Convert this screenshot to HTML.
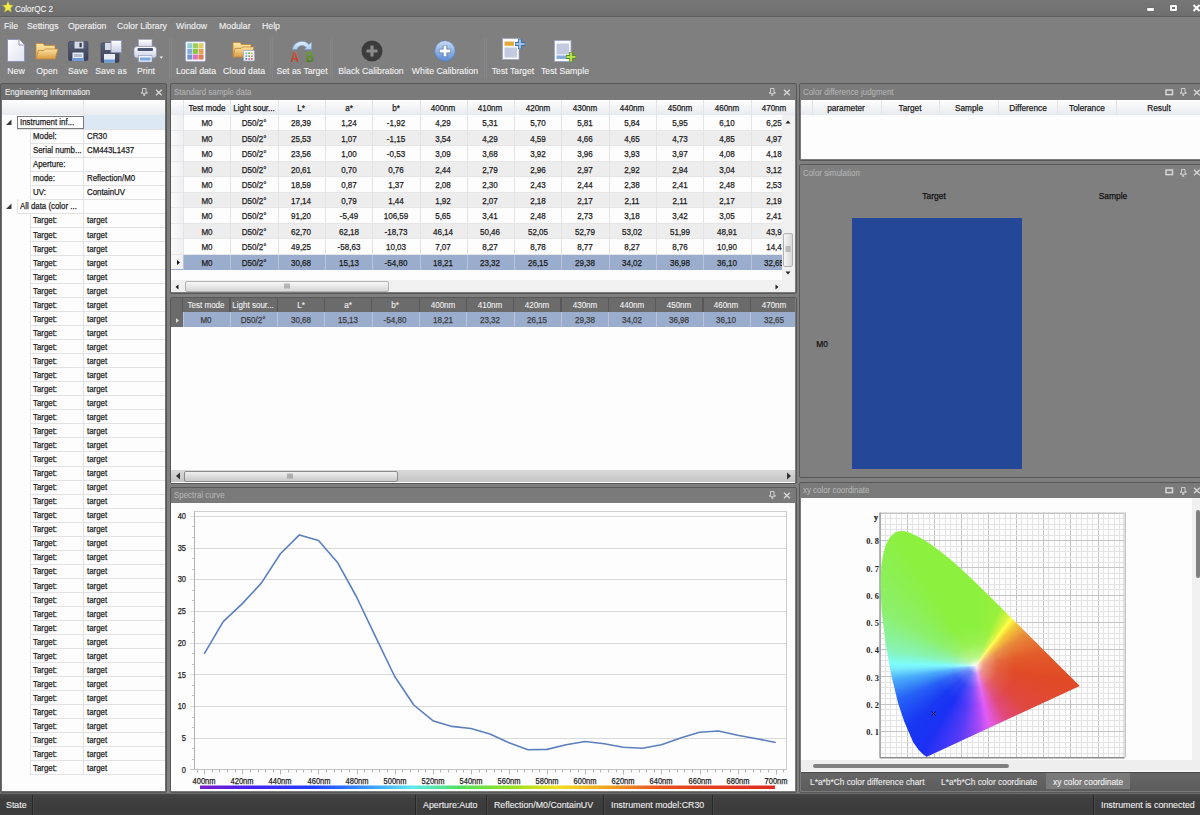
<!DOCTYPE html><html><head><meta charset="utf-8"><style>
*{margin:0;padding:0;box-sizing:border-box}
html,body{width:1200px;height:815px;overflow:hidden}
body{position:relative;background:#7f7f7f;font-family:"Liberation Sans",sans-serif;font-size:10px;color:#222}
.ab{position:absolute}
.t{position:absolute;white-space:nowrap;line-height:1}
.d{-webkit-text-stroke:0.25px currentColor}
.w{-webkit-text-stroke:0.1px currentColor}
.sx{display:inline-block;transform-origin:0 50%}
.wt{color:#f2f2f2}
</style></head><body><div class="ab" style="left:0px;top:0px;width:1200px;height:16px;background:linear-gradient(#777,#6e6e6e)"></div>
<div class="ab" style="left:0px;top:16px;width:1200px;height:1px;background:#5c5c5c"></div>
<div class="ab" style="left:0px;top:17px;width:1200px;height:1px;background:#858585"></div>
<svg class="ab" style="left:2px;top:1px" width="12" height="12" viewBox="0 0 12 12"><path d="M6 0.6 L7.5 4.1 L11.3 4.4 L8.4 6.9 L9.3 10.9 L6 8.8 L2.7 10.9 L3.6 6.9 L0.7 4.4 L4.5 4.1 Z" fill="#f2ef4a" stroke="#c9c23a" stroke-width="0.5"/></svg>
<div class="t w" style="left:15px;top:8.6px;font-size:9.4px;color:#f4f4f4;transform:translate(0,-50%) scaleX(0.86);transform-origin:0 50%;">ColorQC 2</div>
<div class="ab" style="left:1147px;top:8px;width:7px;height:3px;background:#fafafa;border-radius:1px;box-shadow:0 0 1px #444"></div>
<div class="ab" style="left:1170px;top:5px;width:7px;height:6px;border:2px solid #fafafa;border-radius:1px;box-shadow:0 0 1px #444"></div>
<svg class="ab" style="left:1192px;top:4px" width="9" height="8" viewBox="0 0 9 8"><path d="M1.5 1 L7.5 7 M7.5 1 L1.5 7" stroke="#fafafa" stroke-width="2"/></svg>
<div class="t w" style="left:4.3px;top:26px;font-size:9.6px;color:#f4f4f4;transform:translate(0,-50%) scaleX(0.91);transform-origin:0 50%;">File</div>
<div class="t w" style="left:27px;top:26px;font-size:9.6px;color:#f4f4f4;transform:translate(0,-50%) scaleX(0.91);transform-origin:0 50%;">Settings</div>
<div class="t w" style="left:67.6px;top:26px;font-size:9.6px;color:#f4f4f4;transform:translate(0,-50%) scaleX(0.91);transform-origin:0 50%;">Operation</div>
<div class="t w" style="left:116.7px;top:26px;font-size:9.6px;color:#f4f4f4;transform:translate(0,-50%) scaleX(0.91);transform-origin:0 50%;">Color Library</div>
<div class="t w" style="left:176.3px;top:26px;font-size:9.6px;color:#f4f4f4;transform:translate(0,-50%) scaleX(0.91);transform-origin:0 50%;">Window</div>
<div class="t w" style="left:218.6px;top:26px;font-size:9.6px;color:#f4f4f4;transform:translate(0,-50%) scaleX(0.91);transform-origin:0 50%;">Modular</div>
<div class="t w" style="left:261.6px;top:26px;font-size:9.6px;color:#f4f4f4;transform:translate(0,-50%) scaleX(0.91);transform-origin:0 50%;">Help</div>
<svg width="0" height="0" style="position:absolute"><defs>
<linearGradient id="gdoc" x1="0" y1="0" x2="1" y2="1"><stop offset="0" stop-color="#ffffff"/><stop offset="1" stop-color="#dfe3f0"/></linearGradient>
<linearGradient id="gfold" x1="0" y1="0" x2="0" y2="1"><stop offset="0" stop-color="#fbe9a8"/><stop offset="1" stop-color="#e2a94e"/></linearGradient>
<linearGradient id="gfold2" x1="0" y1="0" x2="0" y2="1"><stop offset="0" stop-color="#f9e1a0"/><stop offset="1" stop-color="#dc9c40"/></linearGradient>
<linearGradient id="gflop" x1="0" y1="0" x2="0" y2="1"><stop offset="0" stop-color="#5a6078"/><stop offset="1" stop-color="#3a4058"/></linearGradient>
<linearGradient id="gwc" x1="0" y1="0" x2="0" y2="1"><stop offset="0" stop-color="#c8dcf6"/><stop offset="1" stop-color="#5a8ad0"/></linearGradient>
<linearGradient id="gprn" x1="0" y1="0" x2="0" y2="1"><stop offset="0" stop-color="#ffffff"/><stop offset="1" stop-color="#c9d0e4"/></linearGradient>
</defs></svg>
<svg class="ab" style="left:6px;top:38px" width="20" height="25" viewBox="0 0 20 25"><path d="M1.5 1.5 H13 L18.5 7 V23.5 H1.5 Z" fill="url(#gdoc)" stroke="#8d93bd" stroke-width="1"/><path d="M13 1.5 V7 H18.5" fill="#fff" stroke="#8d93bd" stroke-width="1"/></svg>
<svg class="ab" style="left:35px;top:42px" width="24" height="19" viewBox="0 0 24 19"><path d="M1 1.5 H8 L9.5 3.5 H20 V16.5 H1 Z" fill="url(#gfold)" stroke="#c48a3c" stroke-width="0.8"/><path d="M3.5 8.5 H9 L10.5 7 H23 L20 17 H1 Z" fill="url(#gfold2)" stroke="#c48a3c" stroke-width="0.8"/></svg>
<svg class="ab" style="left:68px;top:41px" width="21" height="21" viewBox="0 0 21 21"><rect x="0.5" y="0.5" width="19.5" height="19" rx="1.5" fill="url(#gflop)" stroke="#3a3f52" stroke-width="0.6"/><rect x="6.5" y="0.5" width="9" height="7" fill="#d7dbe6"/><rect x="11.5" y="1.8" width="2.2" height="4.4" fill="#333a4c"/><rect x="4.5" y="11.5" width="11" height="8.5" fill="#e8ebf3"/><rect x="4.5" y="17" width="11" height="3" fill="#6d9ad8"/><rect x="6" y="13" width="8" height="3" fill="#b8bdd0"/></svg>
<svg class="ab" style="left:100px;top:40px" width="23" height="23" viewBox="0 0 23 23"><rect x="1" y="3" width="18" height="19.5" rx="1.5" fill="url(#gflop)" stroke="#3a3f52" stroke-width="0.6"/><rect x="5" y="3" width="8" height="7" fill="#d7dbe6"/><rect x="4" y="14" width="11" height="8.5" fill="#e8ebf3"/><rect x="4" y="19.5" width="11" height="3" fill="#6d9ad8"/><rect x="11" y="0.5" width="10.5" height="12" fill="url(#gprn)" stroke="#8d93bd" stroke-width="0.8"/></svg>
<svg class="ab" style="left:133px;top:39px" width="32" height="24" viewBox="0 0 32 24"><rect x="5.5" y="0.5" width="13.5" height="9" fill="url(#gprn)" stroke="#9aa0c0" stroke-width="0.6"/><rect x="1" y="7.5" width="22.5" height="11.5" rx="3" fill="url(#gprn)" stroke="#8d93bd" stroke-width="0.8"/><rect x="4.5" y="9" width="15.5" height="3" rx="1" fill="#4c5570"/><rect x="5.5" y="16.5" width="13.5" height="6.5" fill="#f0f3fa" stroke="#8d93bd" stroke-width="0.6"/><rect x="7" y="18.5" width="10.5" height="3" fill="#7aa8e0"/><path d="M26.5 17.5 H30 L28.25 19.8 Z" fill="#f0f0f0"/></svg>
<div class="ab" style="left:169px;top:37px;width:1px;height:42px;background:#858585"></div>
<div class="ab" style="left:171px;top:37px;width:1px;height:42px;background:#858585"></div>
<div class="ab" style="left:269.5px;top:37px;width:1px;height:42px;background:#858585"></div>
<div class="ab" style="left:271.5px;top:37px;width:1px;height:42px;background:#858585"></div>
<div class="ab" style="left:329.5px;top:37px;width:1px;height:42px;background:#858585"></div>
<div class="ab" style="left:331.5px;top:37px;width:1px;height:42px;background:#858585"></div>
<div class="ab" style="left:484px;top:37px;width:1px;height:42px;background:#858585"></div>
<div class="ab" style="left:486px;top:37px;width:1px;height:42px;background:#858585"></div>
<svg class="ab" style="left:184.5px;top:40.5px" width="21" height="21" viewBox="0 0 21 21"><rect x="0.5" y="0.5" width="20" height="20" rx="1.5" fill="#f6f8fc" stroke="#9aa4c8" stroke-width="0.8"/><rect x="2.3" y="2.3" width="5" height="5" fill="#8fcfd9"/><rect x="7.8999999999999995" y="2.3" width="5" height="5" fill="#9fcd55"/><rect x="13.5" y="2.3" width="5" height="5" fill="#dfcf62"/><rect x="2.3" y="7.8999999999999995" width="5" height="5" fill="#83a9df"/><rect x="7.8999999999999995" y="7.8999999999999995" width="5" height="5" fill="#8bc744"/><rect x="13.5" y="7.8999999999999995" width="5" height="5" fill="#dfa256"/><rect x="2.3" y="13.5" width="5" height="5" fill="#7493d2"/><rect x="7.8999999999999995" y="13.5" width="5" height="5" fill="#df73b9"/><rect x="13.5" y="13.5" width="5" height="5" fill="#df7b55"/></svg>
<svg class="ab" style="left:232px;top:41px" width="24" height="21" viewBox="0 0 24 21"><path d="M1 1.5 H8 L9.5 3.5 H19 V15 H1 Z" fill="url(#gfold)" stroke="#c48a3c" stroke-width="0.8"/><path d="M3 7.5 H9 L10.5 6 H22 L19.5 16 H1 Z" fill="url(#gfold2)" stroke="#c48a3c" stroke-width="0.8"/><rect x="11.5" y="9.5" width="11" height="10.5" rx="1" fill="#f3f5fb" stroke="#9aa4c8" stroke-width="0.7"/><circle cx="14.3" cy="12.3" r="0.95" fill="#60c8d8"/><circle cx="17.1" cy="12.3" r="0.95" fill="#70c040"/><circle cx="19.9" cy="12.3" r="0.95" fill="#e0c040"/><circle cx="14.3" cy="15.100000000000001" r="0.95" fill="#5090e0"/><circle cx="17.1" cy="15.100000000000001" r="0.95" fill="#60b030"/><circle cx="19.9" cy="15.100000000000001" r="0.95" fill="#e08030"/><circle cx="14.3" cy="17.9" r="0.95" fill="#4070d0"/><circle cx="17.1" cy="17.9" r="0.95" fill="#e050b0"/><circle cx="19.9" cy="17.9" r="0.95" fill="#e05030"/></svg>
<svg class="ab" style="left:286px;top:37px" width="30" height="27" viewBox="0 0 30 27"><defs><linearGradient id="garc" x1="0" y1="0" x2="0" y2="1"><stop offset="0" stop-color="#e6f4fe"/><stop offset="1" stop-color="#a8c8ee"/></linearGradient><linearGradient id="gA" x1="0" y1="0" x2="0" y2="1"><stop offset="0" stop-color="#d86048"/><stop offset="1" stop-color="#b83424"/></linearGradient><linearGradient id="gB" x1="0" y1="0" x2="0" y2="1"><stop offset="0" stop-color="#7ab030"/><stop offset="1" stop-color="#3e7a14"/></linearGradient></defs><path d="M6.4 12.6 A9.6 9.6 0 0 1 23 7.6 L25.6 5 V12.6 H18.2 L20.2 10.6 A5.2 5.2 0 0 0 11 12.6 Z" fill="url(#garc)" stroke="#7d9cc8" stroke-width="0.7" stroke-linejoin="round"/><g transform="translate(4.6,24.7) scale(0.78,1)"><text x="0" y="0" font-family="Liberation Sans" font-size="15.2" font-weight="bold" fill="url(#gA)">A</text></g><g transform="translate(20.1,24.6) scale(0.72,1)"><text x="0" y="0" font-family="Liberation Sans" font-size="15.2" font-weight="bold" fill="url(#gB)">B</text></g></svg>
<svg class="ab" style="left:361px;top:40px" width="22" height="22" viewBox="0 0 22 22"><circle cx="11" cy="11" r="10.5" fill="#3c3c3c"/><path d="M11 5.5 V16.5 M5.5 11 H16.5" stroke="#8a8a8a" stroke-width="3.2"/></svg>
<svg class="ab" style="left:434px;top:40px" width="22" height="22" viewBox="0 0 22 22"><circle cx="11" cy="11" r="10.3" fill="url(#gwc)" stroke="#5a7ab8" stroke-width="0.6"/><path d="M11 5.5 V16.5 M5.5 11 H16.5" stroke="#5a78b0" stroke-width="4.6"/><path d="M11 5.8 V16.2 M5.8 11 H16.2" stroke="#fff" stroke-width="2.8"/></svg>
<svg class="ab" style="left:501px;top:35px" width="26" height="27" viewBox="0 0 26 27"><rect x="1.5" y="3.5" width="16.5" height="21" fill="#fbfcff" stroke="#9aa4c8" stroke-width="0.8"/><rect x="3.5" y="6.5" width="9.5" height="4.3" fill="#e2aa3a"/><rect x="3.5" y="12.5" width="12.5" height="10" fill="#c3c9de"/><path d="M19 4 V14 M14 9 H24" stroke="#3c6aa8" stroke-width="3.8"/><path d="M19 4.5 V13.5 M14.5 9 H23.5" stroke="#9cc2ec" stroke-width="2.2"/></svg>
<svg class="ab" style="left:553px;top:35px" width="26" height="28" viewBox="0 0 26 28"><rect x="1.5" y="5.5" width="16.5" height="21" fill="#fbfcff" stroke="#9aa4c8" stroke-width="0.8"/><rect x="3.5" y="8.5" width="12.5" height="11" fill="#c3c9de"/><rect x="3.5" y="20.5" width="9.5" height="3.5" fill="#86acdc"/><path d="M18 17 V27 M13 22 H23" stroke="#5a8a20" stroke-width="3.8"/><path d="M18 17.5 V26.5 M13.5 22 H22.5" stroke="#b6dc50" stroke-width="2.2"/></svg>
<div class="t w" style="left:15.5px;top:71.3px;font-size:9.8px;color:#f4f4f4;transform:translate(-50%,-50%) scaleX(0.89);transform-origin:50% 50%;">New</div>
<div class="t w" style="left:46.5px;top:71.3px;font-size:9.8px;color:#f4f4f4;transform:translate(-50%,-50%) scaleX(0.89);transform-origin:50% 50%;">Open</div>
<div class="t w" style="left:77.5px;top:71.3px;font-size:9.8px;color:#f4f4f4;transform:translate(-50%,-50%) scaleX(0.89);transform-origin:50% 50%;">Save</div>
<div class="t w" style="left:111px;top:71.3px;font-size:9.8px;color:#f4f4f4;transform:translate(-50%,-50%) scaleX(0.89);transform-origin:50% 50%;">Save as</div>
<div class="t w" style="left:145.5px;top:71.3px;font-size:9.8px;color:#f4f4f4;transform:translate(-50%,-50%) scaleX(0.89);transform-origin:50% 50%;">Print</div>
<div class="t w" style="left:195.6px;top:71.3px;font-size:9.8px;color:#f4f4f4;transform:translate(-50%,-50%) scaleX(0.89);transform-origin:50% 50%;">Local data</div>
<div class="t w" style="left:243.5px;top:71.3px;font-size:9.8px;color:#f4f4f4;transform:translate(-50%,-50%) scaleX(0.89);transform-origin:50% 50%;">Cloud data</div>
<div class="t w" style="left:301.5px;top:71.3px;font-size:9.8px;color:#f4f4f4;transform:translate(-50%,-50%) scaleX(0.89);transform-origin:50% 50%;">Set as Target</div>
<div class="t w" style="left:371.2px;top:71.3px;font-size:9.8px;color:#f4f4f4;transform:translate(-50%,-50%) scaleX(0.89);transform-origin:50% 50%;">Black Calibration</div>
<div class="t w" style="left:444.8px;top:71.3px;font-size:9.8px;color:#f4f4f4;transform:translate(-50%,-50%) scaleX(0.89);transform-origin:50% 50%;">White Calibration</div>
<div class="t w" style="left:512.7px;top:71.3px;font-size:9.8px;color:#f4f4f4;transform:translate(-50%,-50%) scaleX(0.89);transform-origin:50% 50%;">Test Target</div>
<div class="t w" style="left:565.3px;top:71.3px;font-size:9.8px;color:#f4f4f4;transform:translate(-50%,-50%) scaleX(0.89);transform-origin:50% 50%;">Test Sample</div>
<div class="ab" style="left:0px;top:83px;width:167px;height:710px;border:1px solid #585858;border-radius:2px;background:#6e6e6e"></div>
<div class="ab" style="left:2px;top:100px;width:163px;height:691px;background:#fdfdfd"></div>
<div class="t w" style="left:5px;top:92px;font-size:9px;color:#f0f0f0;transform:translate(0,-50%) scaleX(0.89);transform-origin:0 50%;">Engineering Information</div>
<svg class="ab" style="left:141px;top:88px" width="7" height="8" viewBox="0 0 7 8"><path d="M1.5 0.5 H5 V4.5 H6.3 V5.3 H3.7 V7.8 H2.8 V5.3 H0.2 V4.5 H1.5 Z" fill="none" stroke="#d6d6d6" stroke-width="0.9"/></svg>
<svg class="ab" style="left:154.5px;top:88.5px" width="8" height="7" viewBox="0 0 8 7"><path d="M1 0.8 L6.8 6.2 M6.8 0.8 L1 6.2" stroke="#d6d6d6" stroke-width="1.4"/></svg>
<div class="ab" style="left:169.5px;top:83px;width:627.0px;height:211px;border:1px solid #585858;border-radius:2px;background:#7a7a7a"></div>
<div class="ab" style="left:171px;top:100px;width:624px;height:192px;background:#fdfdfd"></div>
<div class="t w" style="left:174px;top:92px;font-size:9px;color:#b4b4b4;transform:translate(0,-50%) scaleX(0.88);transform-origin:0 50%;">Standard sample data</div>
<svg class="ab" style="left:769px;top:88px" width="7" height="8" viewBox="0 0 7 8"><path d="M1.5 0.5 H5 V4.5 H6.3 V5.3 H3.7 V7.8 H2.8 V5.3 H0.2 V4.5 H1.5 Z" fill="none" stroke="#d6d6d6" stroke-width="0.9"/></svg>
<svg class="ab" style="left:782.5px;top:88.5px" width="8" height="7" viewBox="0 0 8 7"><path d="M1 0.8 L6.8 6.2 M6.8 0.8 L1 6.2" stroke="#d6d6d6" stroke-width="1.4"/></svg>
<div class="ab" style="left:169.5px;top:296.5px;width:627.0px;height:187.5px;border:1px solid #585858;border-radius:2px;background:#7a7a7a"></div>
<div class="ab" style="left:171px;top:297.5px;width:624px;height:185px;background:#fdfdfd"></div>
<div class="ab" style="left:169.5px;top:486.5px;width:627.0px;height:306.5px;border:1px solid #585858;border-radius:2px;background:#7a7a7a"></div>
<div class="ab" style="left:171px;top:503px;width:624px;height:288px;background:#fdfdfd"></div>
<div class="t w" style="left:174px;top:495px;font-size:9px;color:#b4b4b4;transform:translate(0,-50%) scaleX(0.88);transform-origin:0 50%;">Spectral curve</div>
<svg class="ab" style="left:769px;top:491px" width="7" height="8" viewBox="0 0 7 8"><path d="M1.5 0.5 H5 V4.5 H6.3 V5.3 H3.7 V7.8 H2.8 V5.3 H0.2 V4.5 H1.5 Z" fill="none" stroke="#d6d6d6" stroke-width="0.9"/></svg>
<svg class="ab" style="left:782.5px;top:491.5px" width="8" height="7" viewBox="0 0 8 7"><path d="M1 0.8 L6.8 6.2 M6.8 0.8 L1 6.2" stroke="#d6d6d6" stroke-width="1.4"/></svg>
<div class="ab" style="left:799px;top:83px;width:404px;height:77.5px;border:1px solid #585858;border-radius:2px;background:#7a7a7a"></div>
<div class="ab" style="left:800.5px;top:100px;width:400px;height:59px;background:#fdfdfd"></div>
<div class="t w" style="left:803px;top:92px;font-size:9px;color:#b4b4b4;transform:translate(0,-50%) scaleX(0.88);transform-origin:0 50%;">Color difference judgment</div>
<svg class="ab" style="left:1164.5px;top:88.5px" width="9" height="7" viewBox="0 0 9 7"><rect x="1" y="1" width="6.5" height="4.6" fill="none" stroke="#d6d6d6" stroke-width="1.5"/></svg>
<svg class="ab" style="left:1179.5px;top:88px" width="7" height="8" viewBox="0 0 7 8"><path d="M1.5 0.5 H5 V4.5 H6.3 V5.3 H3.7 V7.8 H2.8 V5.3 H0.2 V4.5 H1.5 Z" fill="none" stroke="#d6d6d6" stroke-width="0.9"/></svg>
<svg class="ab" style="left:1193px;top:88.5px" width="8" height="7" viewBox="0 0 8 7"><path d="M1 0.8 L6.8 6.2 M6.8 0.8 L1 6.2" stroke="#d6d6d6" stroke-width="1.4"/></svg>
<div class="ab" style="left:799px;top:163.5px;width:404px;height:314.5px;border:1px solid #585858;border-radius:2px;background:#7f7f7f"></div>
<div class="t w" style="left:803px;top:172.5px;font-size:9px;color:#b4b4b4;transform:translate(0,-50%) scaleX(0.88);transform-origin:0 50%;">Color simulation</div>
<svg class="ab" style="left:1164.5px;top:169px" width="9" height="7" viewBox="0 0 9 7"><rect x="1" y="1" width="6.5" height="4.6" fill="none" stroke="#d6d6d6" stroke-width="1.5"/></svg>
<svg class="ab" style="left:1179.5px;top:168.5px" width="7" height="8" viewBox="0 0 7 8"><path d="M1.5 0.5 H5 V4.5 H6.3 V5.3 H3.7 V7.8 H2.8 V5.3 H0.2 V4.5 H1.5 Z" fill="none" stroke="#d6d6d6" stroke-width="0.9"/></svg>
<svg class="ab" style="left:1193px;top:169px" width="8" height="7" viewBox="0 0 8 7"><path d="M1 0.8 L6.8 6.2 M6.8 0.8 L1 6.2" stroke="#d6d6d6" stroke-width="1.4"/></svg>
<div class="ab" style="left:799px;top:481.5px;width:404px;height:311.5px;border:1px solid #585858;border-radius:2px;background:#7a7a7a"></div>
<div class="ab" style="left:800.5px;top:498px;width:400px;height:262px;background:#fdfdfd"></div>
<div class="t w" style="left:803px;top:490px;font-size:9px;color:#b4b4b4;transform:translate(0,-50%) scaleX(0.88);transform-origin:0 50%;">xy color coordinate</div>
<svg class="ab" style="left:1164.5px;top:487px" width="9" height="7" viewBox="0 0 9 7"><rect x="1" y="1" width="6.5" height="4.6" fill="none" stroke="#d6d6d6" stroke-width="1.5"/></svg>
<svg class="ab" style="left:1179.5px;top:486.5px" width="7" height="8" viewBox="0 0 7 8"><path d="M1.5 0.5 H5 V4.5 H6.3 V5.3 H3.7 V7.8 H2.8 V5.3 H0.2 V4.5 H1.5 Z" fill="none" stroke="#d6d6d6" stroke-width="0.9"/></svg>
<svg class="ab" style="left:1193px;top:487px" width="8" height="7" viewBox="0 0 8 7"><path d="M1 0.8 L6.8 6.2 M6.8 0.8 L1 6.2" stroke="#d6d6d6" stroke-width="1.4"/></svg>
<div class="ab" style="left:0px;top:793px;width:1200px;height:1px;background:#6c6c6c"></div>
<div class="ab" style="left:0px;top:794px;width:1200px;height:21px;background:linear-gradient(#474747,#3e3e3e 25%,#3b3b3b 85%,#3f3f3f)"></div>
<div class="ab" style="left:2px;top:100px;width:163px;height:15px;background:linear-gradient(#fdfdfd,#e9ebef)"></div>
<div class="ab" style="left:83px;top:100px;width:1px;height:15px;background:#e4e6ea"></div>
<div class="ab" style="left:83px;top:115.0px;width:82px;height:14.04px;background:#dce8f4"></div>
<div class="ab" style="left:17px;top:115.5px;width:66.5px;height:13.5px;border:1px solid #7a7a7a;background:#fdfdfd"></div>
<svg class="ab" style="left:5px;top:119.0px" width="8" height="7" viewBox="0 0 8 7"><path d="M6.5 0.5 V6 H1 Z" fill="#3a3a3a"/></svg>
<div class="ab" style="left:17px;top:129.04px;width:148px;height:1px;background:#e2e2e2"></div>
<div class="t d" style="left:20px;top:122.2px;font-size:9.6px;color:#1a1a1a;transform:translate(0,-50%) scaleX(0.82);transform-origin:0 50%;">Instrument inf...</div>
<div class="ab" style="left:29.5px;top:129.04px;width:1px;height:14.04px;background:#e2e2e2"></div>
<div class="ab" style="left:83px;top:129.04px;width:1px;height:14.04px;background:#e2e2e2"></div>
<div class="ab" style="left:29.5px;top:142.57999999999998px;width:135.5px;height:1px;background:#e2e2e2"></div>
<div class="t d" style="left:32.8px;top:136.23999999999998px;font-size:9.6px;color:#1a1a1a;transform:translate(0,-50%) scaleX(0.82);transform-origin:0 50%;">Model:</div>
<div class="t d" style="left:86.6px;top:136.23999999999998px;font-size:9.6px;color:#1a1a1a;transform:translate(0,-50%) scaleX(0.82);transform-origin:0 50%;">CR30</div>
<div class="ab" style="left:29.5px;top:143.07999999999998px;width:1px;height:14.04px;background:#e2e2e2"></div>
<div class="ab" style="left:83px;top:143.07999999999998px;width:1px;height:14.04px;background:#e2e2e2"></div>
<div class="ab" style="left:29.5px;top:156.61999999999998px;width:135.5px;height:1px;background:#e2e2e2"></div>
<div class="t d" style="left:32.8px;top:150.27999999999997px;font-size:9.6px;color:#1a1a1a;transform:translate(0,-50%) scaleX(0.82);transform-origin:0 50%;">Serial numb...</div>
<div class="t d" style="left:86.6px;top:150.27999999999997px;font-size:9.6px;color:#1a1a1a;transform:translate(0,-50%) scaleX(0.82);transform-origin:0 50%;">CM443L1437</div>
<div class="ab" style="left:29.5px;top:157.12px;width:1px;height:14.04px;background:#e2e2e2"></div>
<div class="ab" style="left:83px;top:157.12px;width:1px;height:14.04px;background:#e2e2e2"></div>
<div class="ab" style="left:29.5px;top:170.66px;width:135.5px;height:1px;background:#e2e2e2"></div>
<div class="t d" style="left:32.8px;top:164.32px;font-size:9.6px;color:#1a1a1a;transform:translate(0,-50%) scaleX(0.82);transform-origin:0 50%;">Aperture:</div>
<div class="ab" style="left:29.5px;top:171.16px;width:1px;height:14.04px;background:#e2e2e2"></div>
<div class="ab" style="left:83px;top:171.16px;width:1px;height:14.04px;background:#e2e2e2"></div>
<div class="ab" style="left:29.5px;top:184.7px;width:135.5px;height:1px;background:#e2e2e2"></div>
<div class="t d" style="left:32.8px;top:178.35999999999999px;font-size:9.6px;color:#1a1a1a;transform:translate(0,-50%) scaleX(0.82);transform-origin:0 50%;">mode:</div>
<div class="t d" style="left:86.6px;top:178.35999999999999px;font-size:9.6px;color:#1a1a1a;transform:translate(0,-50%) scaleX(0.82);transform-origin:0 50%;">Reflection/M0</div>
<div class="ab" style="left:29.5px;top:185.2px;width:1px;height:14.04px;background:#e2e2e2"></div>
<div class="ab" style="left:83px;top:185.2px;width:1px;height:14.04px;background:#e2e2e2"></div>
<div class="ab" style="left:29.5px;top:198.73999999999998px;width:135.5px;height:1px;background:#e2e2e2"></div>
<div class="t d" style="left:32.8px;top:192.39999999999998px;font-size:9.6px;color:#1a1a1a;transform:translate(0,-50%) scaleX(0.82);transform-origin:0 50%;">UV:</div>
<div class="t d" style="left:86.6px;top:192.39999999999998px;font-size:9.6px;color:#1a1a1a;transform:translate(0,-50%) scaleX(0.82);transform-origin:0 50%;">ContainUV</div>
<svg class="ab" style="left:5px;top:203.24px" width="8" height="7" viewBox="0 0 8 7"><path d="M6.5 0.5 V6 H1 Z" fill="#3a3a3a"/></svg>
<div class="ab" style="left:17px;top:213.28px;width:148px;height:1px;background:#e2e2e2"></div>
<div class="ab" style="left:17px;top:199.24px;width:1px;height:14.04px;background:#e2e2e2"></div>
<div class="ab" style="left:83px;top:199.24px;width:1px;height:14.04px;background:#e2e2e2"></div>
<div class="t d" style="left:20px;top:206.44px;font-size:9.6px;color:#1a1a1a;transform:translate(0,-50%) scaleX(0.82);transform-origin:0 50%;">All data (color ...</div>
<div class="ab" style="left:29.5px;top:213.28px;width:1px;height:14.04px;background:#e2e2e2"></div>
<div class="ab" style="left:83px;top:213.28px;width:1px;height:14.04px;background:#e2e2e2"></div>
<div class="ab" style="left:29.5px;top:226.82px;width:135.5px;height:1px;background:#e2e2e2"></div>
<div class="t d" style="left:32.8px;top:220.48px;font-size:9.6px;color:#1a1a1a;transform:translate(0,-50%) scaleX(0.82);transform-origin:0 50%;">Target:</div>
<div class="t d" style="left:86.6px;top:220.48px;font-size:9.6px;color:#1a1a1a;transform:translate(0,-50%) scaleX(0.82);transform-origin:0 50%;">target</div>
<div class="ab" style="left:29.5px;top:227.32px;width:1px;height:14.04px;background:#e2e2e2"></div>
<div class="ab" style="left:83px;top:227.32px;width:1px;height:14.04px;background:#e2e2e2"></div>
<div class="ab" style="left:29.5px;top:240.85999999999999px;width:135.5px;height:1px;background:#e2e2e2"></div>
<div class="t d" style="left:32.8px;top:234.51999999999998px;font-size:9.6px;color:#1a1a1a;transform:translate(0,-50%) scaleX(0.82);transform-origin:0 50%;">Target:</div>
<div class="t d" style="left:86.6px;top:234.51999999999998px;font-size:9.6px;color:#1a1a1a;transform:translate(0,-50%) scaleX(0.82);transform-origin:0 50%;">target</div>
<div class="ab" style="left:29.5px;top:241.35999999999999px;width:1px;height:14.04px;background:#e2e2e2"></div>
<div class="ab" style="left:83px;top:241.35999999999999px;width:1px;height:14.04px;background:#e2e2e2"></div>
<div class="ab" style="left:29.5px;top:254.89999999999998px;width:135.5px;height:1px;background:#e2e2e2"></div>
<div class="t d" style="left:32.8px;top:248.55999999999997px;font-size:9.6px;color:#1a1a1a;transform:translate(0,-50%) scaleX(0.82);transform-origin:0 50%;">Target:</div>
<div class="t d" style="left:86.6px;top:248.55999999999997px;font-size:9.6px;color:#1a1a1a;transform:translate(0,-50%) scaleX(0.82);transform-origin:0 50%;">target</div>
<div class="ab" style="left:29.5px;top:255.39999999999998px;width:1px;height:14.04px;background:#e2e2e2"></div>
<div class="ab" style="left:83px;top:255.39999999999998px;width:1px;height:14.04px;background:#e2e2e2"></div>
<div class="ab" style="left:29.5px;top:268.94px;width:135.5px;height:1px;background:#e2e2e2"></div>
<div class="t d" style="left:32.8px;top:262.59999999999997px;font-size:9.6px;color:#1a1a1a;transform:translate(0,-50%) scaleX(0.82);transform-origin:0 50%;">Target:</div>
<div class="t d" style="left:86.6px;top:262.59999999999997px;font-size:9.6px;color:#1a1a1a;transform:translate(0,-50%) scaleX(0.82);transform-origin:0 50%;">target</div>
<div class="ab" style="left:29.5px;top:269.44px;width:1px;height:14.04px;background:#e2e2e2"></div>
<div class="ab" style="left:83px;top:269.44px;width:1px;height:14.04px;background:#e2e2e2"></div>
<div class="ab" style="left:29.5px;top:282.98px;width:135.5px;height:1px;background:#e2e2e2"></div>
<div class="t d" style="left:32.8px;top:276.64px;font-size:9.6px;color:#1a1a1a;transform:translate(0,-50%) scaleX(0.82);transform-origin:0 50%;">Target:</div>
<div class="t d" style="left:86.6px;top:276.64px;font-size:9.6px;color:#1a1a1a;transform:translate(0,-50%) scaleX(0.82);transform-origin:0 50%;">target</div>
<div class="ab" style="left:29.5px;top:283.48px;width:1px;height:14.04px;background:#e2e2e2"></div>
<div class="ab" style="left:83px;top:283.48px;width:1px;height:14.04px;background:#e2e2e2"></div>
<div class="ab" style="left:29.5px;top:297.02000000000004px;width:135.5px;height:1px;background:#e2e2e2"></div>
<div class="t d" style="left:32.8px;top:290.68px;font-size:9.6px;color:#1a1a1a;transform:translate(0,-50%) scaleX(0.82);transform-origin:0 50%;">Target:</div>
<div class="t d" style="left:86.6px;top:290.68px;font-size:9.6px;color:#1a1a1a;transform:translate(0,-50%) scaleX(0.82);transform-origin:0 50%;">target</div>
<div class="ab" style="left:29.5px;top:297.52px;width:1px;height:14.04px;background:#e2e2e2"></div>
<div class="ab" style="left:83px;top:297.52px;width:1px;height:14.04px;background:#e2e2e2"></div>
<div class="ab" style="left:29.5px;top:311.06px;width:135.5px;height:1px;background:#e2e2e2"></div>
<div class="t d" style="left:32.8px;top:304.71999999999997px;font-size:9.6px;color:#1a1a1a;transform:translate(0,-50%) scaleX(0.82);transform-origin:0 50%;">Target:</div>
<div class="t d" style="left:86.6px;top:304.71999999999997px;font-size:9.6px;color:#1a1a1a;transform:translate(0,-50%) scaleX(0.82);transform-origin:0 50%;">target</div>
<div class="ab" style="left:29.5px;top:311.56px;width:1px;height:14.04px;background:#e2e2e2"></div>
<div class="ab" style="left:83px;top:311.56px;width:1px;height:14.04px;background:#e2e2e2"></div>
<div class="ab" style="left:29.5px;top:325.1px;width:135.5px;height:1px;background:#e2e2e2"></div>
<div class="t d" style="left:32.8px;top:318.76px;font-size:9.6px;color:#1a1a1a;transform:translate(0,-50%) scaleX(0.82);transform-origin:0 50%;">Target:</div>
<div class="t d" style="left:86.6px;top:318.76px;font-size:9.6px;color:#1a1a1a;transform:translate(0,-50%) scaleX(0.82);transform-origin:0 50%;">target</div>
<div class="ab" style="left:29.5px;top:325.6px;width:1px;height:14.04px;background:#e2e2e2"></div>
<div class="ab" style="left:83px;top:325.6px;width:1px;height:14.04px;background:#e2e2e2"></div>
<div class="ab" style="left:29.5px;top:339.14000000000004px;width:135.5px;height:1px;background:#e2e2e2"></div>
<div class="t d" style="left:32.8px;top:332.8px;font-size:9.6px;color:#1a1a1a;transform:translate(0,-50%) scaleX(0.82);transform-origin:0 50%;">Target:</div>
<div class="t d" style="left:86.6px;top:332.8px;font-size:9.6px;color:#1a1a1a;transform:translate(0,-50%) scaleX(0.82);transform-origin:0 50%;">target</div>
<div class="ab" style="left:29.5px;top:339.64px;width:1px;height:14.04px;background:#e2e2e2"></div>
<div class="ab" style="left:83px;top:339.64px;width:1px;height:14.04px;background:#e2e2e2"></div>
<div class="ab" style="left:29.5px;top:353.18px;width:135.5px;height:1px;background:#e2e2e2"></div>
<div class="t d" style="left:32.8px;top:346.84px;font-size:9.6px;color:#1a1a1a;transform:translate(0,-50%) scaleX(0.82);transform-origin:0 50%;">Target:</div>
<div class="t d" style="left:86.6px;top:346.84px;font-size:9.6px;color:#1a1a1a;transform:translate(0,-50%) scaleX(0.82);transform-origin:0 50%;">target</div>
<div class="ab" style="left:29.5px;top:353.67999999999995px;width:1px;height:14.04px;background:#e2e2e2"></div>
<div class="ab" style="left:83px;top:353.67999999999995px;width:1px;height:14.04px;background:#e2e2e2"></div>
<div class="ab" style="left:29.5px;top:367.21999999999997px;width:135.5px;height:1px;background:#e2e2e2"></div>
<div class="t d" style="left:32.8px;top:360.87999999999994px;font-size:9.6px;color:#1a1a1a;transform:translate(0,-50%) scaleX(0.82);transform-origin:0 50%;">Target:</div>
<div class="t d" style="left:86.6px;top:360.87999999999994px;font-size:9.6px;color:#1a1a1a;transform:translate(0,-50%) scaleX(0.82);transform-origin:0 50%;">target</div>
<div class="ab" style="left:29.5px;top:367.71999999999997px;width:1px;height:14.04px;background:#e2e2e2"></div>
<div class="ab" style="left:83px;top:367.71999999999997px;width:1px;height:14.04px;background:#e2e2e2"></div>
<div class="ab" style="left:29.5px;top:381.26px;width:135.5px;height:1px;background:#e2e2e2"></div>
<div class="t d" style="left:32.8px;top:374.91999999999996px;font-size:9.6px;color:#1a1a1a;transform:translate(0,-50%) scaleX(0.82);transform-origin:0 50%;">Target:</div>
<div class="t d" style="left:86.6px;top:374.91999999999996px;font-size:9.6px;color:#1a1a1a;transform:translate(0,-50%) scaleX(0.82);transform-origin:0 50%;">target</div>
<div class="ab" style="left:29.5px;top:381.76px;width:1px;height:14.04px;background:#e2e2e2"></div>
<div class="ab" style="left:83px;top:381.76px;width:1px;height:14.04px;background:#e2e2e2"></div>
<div class="ab" style="left:29.5px;top:395.3px;width:135.5px;height:1px;background:#e2e2e2"></div>
<div class="t d" style="left:32.8px;top:388.96px;font-size:9.6px;color:#1a1a1a;transform:translate(0,-50%) scaleX(0.82);transform-origin:0 50%;">Target:</div>
<div class="t d" style="left:86.6px;top:388.96px;font-size:9.6px;color:#1a1a1a;transform:translate(0,-50%) scaleX(0.82);transform-origin:0 50%;">target</div>
<div class="ab" style="left:29.5px;top:395.79999999999995px;width:1px;height:14.04px;background:#e2e2e2"></div>
<div class="ab" style="left:83px;top:395.79999999999995px;width:1px;height:14.04px;background:#e2e2e2"></div>
<div class="ab" style="left:29.5px;top:409.34px;width:135.5px;height:1px;background:#e2e2e2"></div>
<div class="t d" style="left:32.8px;top:402.99999999999994px;font-size:9.6px;color:#1a1a1a;transform:translate(0,-50%) scaleX(0.82);transform-origin:0 50%;">Target:</div>
<div class="t d" style="left:86.6px;top:402.99999999999994px;font-size:9.6px;color:#1a1a1a;transform:translate(0,-50%) scaleX(0.82);transform-origin:0 50%;">target</div>
<div class="ab" style="left:29.5px;top:409.84px;width:1px;height:14.04px;background:#e2e2e2"></div>
<div class="ab" style="left:83px;top:409.84px;width:1px;height:14.04px;background:#e2e2e2"></div>
<div class="ab" style="left:29.5px;top:423.38px;width:135.5px;height:1px;background:#e2e2e2"></div>
<div class="t d" style="left:32.8px;top:417.03999999999996px;font-size:9.6px;color:#1a1a1a;transform:translate(0,-50%) scaleX(0.82);transform-origin:0 50%;">Target:</div>
<div class="t d" style="left:86.6px;top:417.03999999999996px;font-size:9.6px;color:#1a1a1a;transform:translate(0,-50%) scaleX(0.82);transform-origin:0 50%;">target</div>
<div class="ab" style="left:29.5px;top:423.88px;width:1px;height:14.04px;background:#e2e2e2"></div>
<div class="ab" style="left:83px;top:423.88px;width:1px;height:14.04px;background:#e2e2e2"></div>
<div class="ab" style="left:29.5px;top:437.42px;width:135.5px;height:1px;background:#e2e2e2"></div>
<div class="t d" style="left:32.8px;top:431.08px;font-size:9.6px;color:#1a1a1a;transform:translate(0,-50%) scaleX(0.82);transform-origin:0 50%;">Target:</div>
<div class="t d" style="left:86.6px;top:431.08px;font-size:9.6px;color:#1a1a1a;transform:translate(0,-50%) scaleX(0.82);transform-origin:0 50%;">target</div>
<div class="ab" style="left:29.5px;top:437.91999999999996px;width:1px;height:14.04px;background:#e2e2e2"></div>
<div class="ab" style="left:83px;top:437.91999999999996px;width:1px;height:14.04px;background:#e2e2e2"></div>
<div class="ab" style="left:29.5px;top:451.46px;width:135.5px;height:1px;background:#e2e2e2"></div>
<div class="t d" style="left:32.8px;top:445.11999999999995px;font-size:9.6px;color:#1a1a1a;transform:translate(0,-50%) scaleX(0.82);transform-origin:0 50%;">Target:</div>
<div class="t d" style="left:86.6px;top:445.11999999999995px;font-size:9.6px;color:#1a1a1a;transform:translate(0,-50%) scaleX(0.82);transform-origin:0 50%;">target</div>
<div class="ab" style="left:29.5px;top:451.96px;width:1px;height:14.04px;background:#e2e2e2"></div>
<div class="ab" style="left:83px;top:451.96px;width:1px;height:14.04px;background:#e2e2e2"></div>
<div class="ab" style="left:29.5px;top:465.5px;width:135.5px;height:1px;background:#e2e2e2"></div>
<div class="t d" style="left:32.8px;top:459.15999999999997px;font-size:9.6px;color:#1a1a1a;transform:translate(0,-50%) scaleX(0.82);transform-origin:0 50%;">Target:</div>
<div class="t d" style="left:86.6px;top:459.15999999999997px;font-size:9.6px;color:#1a1a1a;transform:translate(0,-50%) scaleX(0.82);transform-origin:0 50%;">target</div>
<div class="ab" style="left:29.5px;top:466.0px;width:1px;height:14.04px;background:#e2e2e2"></div>
<div class="ab" style="left:83px;top:466.0px;width:1px;height:14.04px;background:#e2e2e2"></div>
<div class="ab" style="left:29.5px;top:479.54px;width:135.5px;height:1px;background:#e2e2e2"></div>
<div class="t d" style="left:32.8px;top:473.2px;font-size:9.6px;color:#1a1a1a;transform:translate(0,-50%) scaleX(0.82);transform-origin:0 50%;">Target:</div>
<div class="t d" style="left:86.6px;top:473.2px;font-size:9.6px;color:#1a1a1a;transform:translate(0,-50%) scaleX(0.82);transform-origin:0 50%;">target</div>
<div class="ab" style="left:29.5px;top:480.03999999999996px;width:1px;height:14.04px;background:#e2e2e2"></div>
<div class="ab" style="left:83px;top:480.03999999999996px;width:1px;height:14.04px;background:#e2e2e2"></div>
<div class="ab" style="left:29.5px;top:493.58px;width:135.5px;height:1px;background:#e2e2e2"></div>
<div class="t d" style="left:32.8px;top:487.23999999999995px;font-size:9.6px;color:#1a1a1a;transform:translate(0,-50%) scaleX(0.82);transform-origin:0 50%;">Target:</div>
<div class="t d" style="left:86.6px;top:487.23999999999995px;font-size:9.6px;color:#1a1a1a;transform:translate(0,-50%) scaleX(0.82);transform-origin:0 50%;">target</div>
<div class="ab" style="left:29.5px;top:494.08px;width:1px;height:14.04px;background:#e2e2e2"></div>
<div class="ab" style="left:83px;top:494.08px;width:1px;height:14.04px;background:#e2e2e2"></div>
<div class="ab" style="left:29.5px;top:507.62px;width:135.5px;height:1px;background:#e2e2e2"></div>
<div class="t d" style="left:32.8px;top:501.28px;font-size:9.6px;color:#1a1a1a;transform:translate(0,-50%) scaleX(0.82);transform-origin:0 50%;">Target:</div>
<div class="t d" style="left:86.6px;top:501.28px;font-size:9.6px;color:#1a1a1a;transform:translate(0,-50%) scaleX(0.82);transform-origin:0 50%;">target</div>
<div class="ab" style="left:29.5px;top:508.12px;width:1px;height:14.04px;background:#e2e2e2"></div>
<div class="ab" style="left:83px;top:508.12px;width:1px;height:14.04px;background:#e2e2e2"></div>
<div class="ab" style="left:29.5px;top:521.66px;width:135.5px;height:1px;background:#e2e2e2"></div>
<div class="t d" style="left:32.8px;top:515.32px;font-size:9.6px;color:#1a1a1a;transform:translate(0,-50%) scaleX(0.82);transform-origin:0 50%;">Target:</div>
<div class="t d" style="left:86.6px;top:515.32px;font-size:9.6px;color:#1a1a1a;transform:translate(0,-50%) scaleX(0.82);transform-origin:0 50%;">target</div>
<div class="ab" style="left:29.5px;top:522.16px;width:1px;height:14.04px;background:#e2e2e2"></div>
<div class="ab" style="left:83px;top:522.16px;width:1px;height:14.04px;background:#e2e2e2"></div>
<div class="ab" style="left:29.5px;top:535.6999999999999px;width:135.5px;height:1px;background:#e2e2e2"></div>
<div class="t d" style="left:32.8px;top:529.36px;font-size:9.6px;color:#1a1a1a;transform:translate(0,-50%) scaleX(0.82);transform-origin:0 50%;">Target:</div>
<div class="t d" style="left:86.6px;top:529.36px;font-size:9.6px;color:#1a1a1a;transform:translate(0,-50%) scaleX(0.82);transform-origin:0 50%;">target</div>
<div class="ab" style="left:29.5px;top:536.2px;width:1px;height:14.04px;background:#e2e2e2"></div>
<div class="ab" style="left:83px;top:536.2px;width:1px;height:14.04px;background:#e2e2e2"></div>
<div class="ab" style="left:29.5px;top:549.74px;width:135.5px;height:1px;background:#e2e2e2"></div>
<div class="t d" style="left:32.8px;top:543.4000000000001px;font-size:9.6px;color:#1a1a1a;transform:translate(0,-50%) scaleX(0.82);transform-origin:0 50%;">Target:</div>
<div class="t d" style="left:86.6px;top:543.4000000000001px;font-size:9.6px;color:#1a1a1a;transform:translate(0,-50%) scaleX(0.82);transform-origin:0 50%;">target</div>
<div class="ab" style="left:29.5px;top:550.24px;width:1px;height:14.04px;background:#e2e2e2"></div>
<div class="ab" style="left:83px;top:550.24px;width:1px;height:14.04px;background:#e2e2e2"></div>
<div class="ab" style="left:29.5px;top:563.78px;width:135.5px;height:1px;background:#e2e2e2"></div>
<div class="t d" style="left:32.8px;top:557.44px;font-size:9.6px;color:#1a1a1a;transform:translate(0,-50%) scaleX(0.82);transform-origin:0 50%;">Target:</div>
<div class="t d" style="left:86.6px;top:557.44px;font-size:9.6px;color:#1a1a1a;transform:translate(0,-50%) scaleX(0.82);transform-origin:0 50%;">target</div>
<div class="ab" style="left:29.5px;top:564.28px;width:1px;height:14.04px;background:#e2e2e2"></div>
<div class="ab" style="left:83px;top:564.28px;width:1px;height:14.04px;background:#e2e2e2"></div>
<div class="ab" style="left:29.5px;top:577.8199999999999px;width:135.5px;height:1px;background:#e2e2e2"></div>
<div class="t d" style="left:32.8px;top:571.48px;font-size:9.6px;color:#1a1a1a;transform:translate(0,-50%) scaleX(0.82);transform-origin:0 50%;">Target:</div>
<div class="t d" style="left:86.6px;top:571.48px;font-size:9.6px;color:#1a1a1a;transform:translate(0,-50%) scaleX(0.82);transform-origin:0 50%;">target</div>
<div class="ab" style="left:29.5px;top:578.3199999999999px;width:1px;height:14.04px;background:#e2e2e2"></div>
<div class="ab" style="left:83px;top:578.3199999999999px;width:1px;height:14.04px;background:#e2e2e2"></div>
<div class="ab" style="left:29.5px;top:591.8599999999999px;width:135.5px;height:1px;background:#e2e2e2"></div>
<div class="t d" style="left:32.8px;top:585.52px;font-size:9.6px;color:#1a1a1a;transform:translate(0,-50%) scaleX(0.82);transform-origin:0 50%;">Target:</div>
<div class="t d" style="left:86.6px;top:585.52px;font-size:9.6px;color:#1a1a1a;transform:translate(0,-50%) scaleX(0.82);transform-origin:0 50%;">target</div>
<div class="ab" style="left:29.5px;top:592.3599999999999px;width:1px;height:14.04px;background:#e2e2e2"></div>
<div class="ab" style="left:83px;top:592.3599999999999px;width:1px;height:14.04px;background:#e2e2e2"></div>
<div class="ab" style="left:29.5px;top:605.8999999999999px;width:135.5px;height:1px;background:#e2e2e2"></div>
<div class="t d" style="left:32.8px;top:599.56px;font-size:9.6px;color:#1a1a1a;transform:translate(0,-50%) scaleX(0.82);transform-origin:0 50%;">Target:</div>
<div class="t d" style="left:86.6px;top:599.56px;font-size:9.6px;color:#1a1a1a;transform:translate(0,-50%) scaleX(0.82);transform-origin:0 50%;">target</div>
<div class="ab" style="left:29.5px;top:606.4px;width:1px;height:14.04px;background:#e2e2e2"></div>
<div class="ab" style="left:83px;top:606.4px;width:1px;height:14.04px;background:#e2e2e2"></div>
<div class="ab" style="left:29.5px;top:619.9399999999999px;width:135.5px;height:1px;background:#e2e2e2"></div>
<div class="t d" style="left:32.8px;top:613.6px;font-size:9.6px;color:#1a1a1a;transform:translate(0,-50%) scaleX(0.82);transform-origin:0 50%;">Target:</div>
<div class="t d" style="left:86.6px;top:613.6px;font-size:9.6px;color:#1a1a1a;transform:translate(0,-50%) scaleX(0.82);transform-origin:0 50%;">target</div>
<div class="ab" style="left:29.5px;top:620.4399999999999px;width:1px;height:14.04px;background:#e2e2e2"></div>
<div class="ab" style="left:83px;top:620.4399999999999px;width:1px;height:14.04px;background:#e2e2e2"></div>
<div class="ab" style="left:29.5px;top:633.9799999999999px;width:135.5px;height:1px;background:#e2e2e2"></div>
<div class="t d" style="left:32.8px;top:627.64px;font-size:9.6px;color:#1a1a1a;transform:translate(0,-50%) scaleX(0.82);transform-origin:0 50%;">Target:</div>
<div class="t d" style="left:86.6px;top:627.64px;font-size:9.6px;color:#1a1a1a;transform:translate(0,-50%) scaleX(0.82);transform-origin:0 50%;">target</div>
<div class="ab" style="left:29.5px;top:634.48px;width:1px;height:14.04px;background:#e2e2e2"></div>
<div class="ab" style="left:83px;top:634.48px;width:1px;height:14.04px;background:#e2e2e2"></div>
<div class="ab" style="left:29.5px;top:648.02px;width:135.5px;height:1px;background:#e2e2e2"></div>
<div class="t d" style="left:32.8px;top:641.6800000000001px;font-size:9.6px;color:#1a1a1a;transform:translate(0,-50%) scaleX(0.82);transform-origin:0 50%;">Target:</div>
<div class="t d" style="left:86.6px;top:641.6800000000001px;font-size:9.6px;color:#1a1a1a;transform:translate(0,-50%) scaleX(0.82);transform-origin:0 50%;">target</div>
<div class="ab" style="left:29.5px;top:648.52px;width:1px;height:14.04px;background:#e2e2e2"></div>
<div class="ab" style="left:83px;top:648.52px;width:1px;height:14.04px;background:#e2e2e2"></div>
<div class="ab" style="left:29.5px;top:662.06px;width:135.5px;height:1px;background:#e2e2e2"></div>
<div class="t d" style="left:32.8px;top:655.72px;font-size:9.6px;color:#1a1a1a;transform:translate(0,-50%) scaleX(0.82);transform-origin:0 50%;">Target:</div>
<div class="t d" style="left:86.6px;top:655.72px;font-size:9.6px;color:#1a1a1a;transform:translate(0,-50%) scaleX(0.82);transform-origin:0 50%;">target</div>
<div class="ab" style="left:29.5px;top:662.56px;width:1px;height:14.04px;background:#e2e2e2"></div>
<div class="ab" style="left:83px;top:662.56px;width:1px;height:14.04px;background:#e2e2e2"></div>
<div class="ab" style="left:29.5px;top:676.0999999999999px;width:135.5px;height:1px;background:#e2e2e2"></div>
<div class="t d" style="left:32.8px;top:669.76px;font-size:9.6px;color:#1a1a1a;transform:translate(0,-50%) scaleX(0.82);transform-origin:0 50%;">Target:</div>
<div class="t d" style="left:86.6px;top:669.76px;font-size:9.6px;color:#1a1a1a;transform:translate(0,-50%) scaleX(0.82);transform-origin:0 50%;">target</div>
<div class="ab" style="left:29.5px;top:676.5999999999999px;width:1px;height:14.04px;background:#e2e2e2"></div>
<div class="ab" style="left:83px;top:676.5999999999999px;width:1px;height:14.04px;background:#e2e2e2"></div>
<div class="ab" style="left:29.5px;top:690.1399999999999px;width:135.5px;height:1px;background:#e2e2e2"></div>
<div class="t d" style="left:32.8px;top:683.8px;font-size:9.6px;color:#1a1a1a;transform:translate(0,-50%) scaleX(0.82);transform-origin:0 50%;">Target:</div>
<div class="t d" style="left:86.6px;top:683.8px;font-size:9.6px;color:#1a1a1a;transform:translate(0,-50%) scaleX(0.82);transform-origin:0 50%;">target</div>
<div class="ab" style="left:29.5px;top:690.64px;width:1px;height:14.04px;background:#e2e2e2"></div>
<div class="ab" style="left:83px;top:690.64px;width:1px;height:14.04px;background:#e2e2e2"></div>
<div class="ab" style="left:29.5px;top:704.18px;width:135.5px;height:1px;background:#e2e2e2"></div>
<div class="t d" style="left:32.8px;top:697.84px;font-size:9.6px;color:#1a1a1a;transform:translate(0,-50%) scaleX(0.82);transform-origin:0 50%;">Target:</div>
<div class="t d" style="left:86.6px;top:697.84px;font-size:9.6px;color:#1a1a1a;transform:translate(0,-50%) scaleX(0.82);transform-origin:0 50%;">target</div>
<div class="ab" style="left:29.5px;top:704.68px;width:1px;height:14.04px;background:#e2e2e2"></div>
<div class="ab" style="left:83px;top:704.68px;width:1px;height:14.04px;background:#e2e2e2"></div>
<div class="ab" style="left:29.5px;top:718.2199999999999px;width:135.5px;height:1px;background:#e2e2e2"></div>
<div class="t d" style="left:32.8px;top:711.88px;font-size:9.6px;color:#1a1a1a;transform:translate(0,-50%) scaleX(0.82);transform-origin:0 50%;">Target:</div>
<div class="t d" style="left:86.6px;top:711.88px;font-size:9.6px;color:#1a1a1a;transform:translate(0,-50%) scaleX(0.82);transform-origin:0 50%;">target</div>
<div class="ab" style="left:29.5px;top:718.7199999999999px;width:1px;height:14.04px;background:#e2e2e2"></div>
<div class="ab" style="left:83px;top:718.7199999999999px;width:1px;height:14.04px;background:#e2e2e2"></div>
<div class="ab" style="left:29.5px;top:732.2599999999999px;width:135.5px;height:1px;background:#e2e2e2"></div>
<div class="t d" style="left:32.8px;top:725.92px;font-size:9.6px;color:#1a1a1a;transform:translate(0,-50%) scaleX(0.82);transform-origin:0 50%;">Target:</div>
<div class="t d" style="left:86.6px;top:725.92px;font-size:9.6px;color:#1a1a1a;transform:translate(0,-50%) scaleX(0.82);transform-origin:0 50%;">target</div>
<div class="ab" style="left:29.5px;top:732.76px;width:1px;height:14.04px;background:#e2e2e2"></div>
<div class="ab" style="left:83px;top:732.76px;width:1px;height:14.04px;background:#e2e2e2"></div>
<div class="ab" style="left:29.5px;top:746.3px;width:135.5px;height:1px;background:#e2e2e2"></div>
<div class="t d" style="left:32.8px;top:739.96px;font-size:9.6px;color:#1a1a1a;transform:translate(0,-50%) scaleX(0.82);transform-origin:0 50%;">Target:</div>
<div class="t d" style="left:86.6px;top:739.96px;font-size:9.6px;color:#1a1a1a;transform:translate(0,-50%) scaleX(0.82);transform-origin:0 50%;">target</div>
<div class="ab" style="left:29.5px;top:746.8px;width:1px;height:14.04px;background:#e2e2e2"></div>
<div class="ab" style="left:83px;top:746.8px;width:1px;height:14.04px;background:#e2e2e2"></div>
<div class="ab" style="left:29.5px;top:760.3399999999999px;width:135.5px;height:1px;background:#e2e2e2"></div>
<div class="t d" style="left:32.8px;top:754.0px;font-size:9.6px;color:#1a1a1a;transform:translate(0,-50%) scaleX(0.82);transform-origin:0 50%;">Target:</div>
<div class="t d" style="left:86.6px;top:754.0px;font-size:9.6px;color:#1a1a1a;transform:translate(0,-50%) scaleX(0.82);transform-origin:0 50%;">target</div>
<div class="ab" style="left:29.5px;top:760.8399999999999px;width:1px;height:14.04px;background:#e2e2e2"></div>
<div class="ab" style="left:83px;top:760.8399999999999px;width:1px;height:14.04px;background:#e2e2e2"></div>
<div class="ab" style="left:29.5px;top:774.3799999999999px;width:135.5px;height:1px;background:#e2e2e2"></div>
<div class="t d" style="left:32.8px;top:768.04px;font-size:9.6px;color:#1a1a1a;transform:translate(0,-50%) scaleX(0.82);transform-origin:0 50%;">Target:</div>
<div class="t d" style="left:86.6px;top:768.04px;font-size:9.6px;color:#1a1a1a;transform:translate(0,-50%) scaleX(0.82);transform-origin:0 50%;">target</div>
<div class="ab" style="left:171px;top:100px;width:624px;height:15px;overflow:hidden">
<div class="ab" style="left:0px;top:0px;width:640px;height:15px;background:linear-gradient(#fdfdfd 0%,#f4f5f7 50%,#e8eaee 100%)"></div>
<div class="ab" style="left:12.0px;top:0px;width:1px;height:15px;background:#e2e4e8"></div>
<div class="ab" style="left:59.30000000000001px;top:0px;width:1px;height:15px;background:#e2e4e8"></div>
<div class="ab" style="left:106.60000000000002px;top:0px;width:1px;height:15px;background:#e2e4e8"></div>
<div class="ab" style="left:153.89999999999998px;top:0px;width:1px;height:15px;background:#e2e4e8"></div>
<div class="ab" style="left:201.2px;top:0px;width:1px;height:15px;background:#e2e4e8"></div>
<div class="ab" style="left:248.5px;top:0px;width:1px;height:15px;background:#e2e4e8"></div>
<div class="ab" style="left:295.79999999999995px;top:0px;width:1px;height:15px;background:#e2e4e8"></div>
<div class="ab" style="left:343.0999999999999px;top:0px;width:1px;height:15px;background:#e2e4e8"></div>
<div class="ab" style="left:390.4px;top:0px;width:1px;height:15px;background:#e2e4e8"></div>
<div class="ab" style="left:437.70000000000005px;top:0px;width:1px;height:15px;background:#e2e4e8"></div>
<div class="ab" style="left:485.0px;top:0px;width:1px;height:15px;background:#e2e4e8"></div>
<div class="ab" style="left:532.3px;top:0px;width:1px;height:15px;background:#e2e4e8"></div>
<div class="ab" style="left:579.5999999999999px;top:0px;width:1px;height:15px;background:#e2e4e8"></div>
<div class="ab" style="left:626.9px;top:0px;width:1px;height:15px;background:#e2e4e8"></div>
<div class="t d" style="left:35.650000000000006px;top:7.6px;font-size:9.6px;color:#1a1a1a;transform:translate(-50%,-50%) scaleX(0.84);transform-origin:50% 50%;">Test mode</div>
<div class="t d" style="left:82.95000000000002px;top:7.6px;font-size:9.6px;color:#1a1a1a;transform:translate(-50%,-50%) scaleX(0.84);transform-origin:50% 50%;">Light sour...</div>
<div class="t d" style="left:130.25px;top:7.6px;font-size:9.6px;color:#1a1a1a;transform:translate(-50%,-50%) scaleX(0.84);transform-origin:50% 50%;">L*</div>
<div class="t d" style="left:177.54999999999995px;top:7.6px;font-size:9.6px;color:#1a1a1a;transform:translate(-50%,-50%) scaleX(0.84);transform-origin:50% 50%;">a*</div>
<div class="t d" style="left:224.84999999999997px;top:7.6px;font-size:9.6px;color:#1a1a1a;transform:translate(-50%,-50%) scaleX(0.84);transform-origin:50% 50%;">b*</div>
<div class="t d" style="left:272.15px;top:7.6px;font-size:9.6px;color:#1a1a1a;transform:translate(-50%,-50%) scaleX(0.84);transform-origin:50% 50%;">400nm</div>
<div class="t d" style="left:319.44999999999993px;top:7.6px;font-size:9.6px;color:#1a1a1a;transform:translate(-50%,-50%) scaleX(0.84);transform-origin:50% 50%;">410nm</div>
<div class="t d" style="left:366.7499999999999px;top:7.6px;font-size:9.6px;color:#1a1a1a;transform:translate(-50%,-50%) scaleX(0.84);transform-origin:50% 50%;">420nm</div>
<div class="t d" style="left:414.04999999999995px;top:7.6px;font-size:9.6px;color:#1a1a1a;transform:translate(-50%,-50%) scaleX(0.84);transform-origin:50% 50%;">430nm</div>
<div class="t d" style="left:461.35px;top:7.6px;font-size:9.6px;color:#1a1a1a;transform:translate(-50%,-50%) scaleX(0.84);transform-origin:50% 50%;">440nm</div>
<div class="t d" style="left:508.65px;top:7.6px;font-size:9.6px;color:#1a1a1a;transform:translate(-50%,-50%) scaleX(0.84);transform-origin:50% 50%;">450nm</div>
<div class="t d" style="left:555.9499999999999px;top:7.6px;font-size:9.6px;color:#1a1a1a;transform:translate(-50%,-50%) scaleX(0.84);transform-origin:50% 50%;">460nm</div>
<div class="t d" style="left:603.2499999999999px;top:7.6px;font-size:9.6px;color:#1a1a1a;transform:translate(-50%,-50%) scaleX(0.84);transform-origin:50% 50%;">470nm</div>
</div>
<div class="ab" style="left:171px;top:100px;width:610.5px;height:180px;overflow:hidden">
<div class="ab" style="left:0px;top:15.0px;width:12.5px;height:15.5px;background:linear-gradient(90deg,#fafafa,#eeeff2)"></div>
<div class="ab" style="left:0px;top:29.5px;width:640px;height:1px;background:#e6e6e6"></div>
<div class="ab" style="left:12.0px;top:15.0px;width:1px;height:15.5px;background:#e4e4e4"></div>
<div class="ab" style="left:59.30000000000001px;top:15.0px;width:1px;height:15.5px;background:#e4e4e4"></div>
<div class="ab" style="left:106.60000000000002px;top:15.0px;width:1px;height:15.5px;background:#e4e4e4"></div>
<div class="ab" style="left:153.89999999999998px;top:15.0px;width:1px;height:15.5px;background:#e4e4e4"></div>
<div class="ab" style="left:201.2px;top:15.0px;width:1px;height:15.5px;background:#e4e4e4"></div>
<div class="ab" style="left:248.5px;top:15.0px;width:1px;height:15.5px;background:#e4e4e4"></div>
<div class="ab" style="left:295.79999999999995px;top:15.0px;width:1px;height:15.5px;background:#e4e4e4"></div>
<div class="ab" style="left:343.0999999999999px;top:15.0px;width:1px;height:15.5px;background:#e4e4e4"></div>
<div class="ab" style="left:390.4px;top:15.0px;width:1px;height:15.5px;background:#e4e4e4"></div>
<div class="ab" style="left:437.70000000000005px;top:15.0px;width:1px;height:15.5px;background:#e4e4e4"></div>
<div class="ab" style="left:485.0px;top:15.0px;width:1px;height:15.5px;background:#e4e4e4"></div>
<div class="ab" style="left:532.3px;top:15.0px;width:1px;height:15.5px;background:#e4e4e4"></div>
<div class="ab" style="left:579.5999999999999px;top:15.0px;width:1px;height:15.5px;background:#e4e4e4"></div>
<div class="ab" style="left:626.9px;top:15.0px;width:1px;height:15.5px;background:#e4e4e4"></div>
<div class="t d" style="left:35.650000000000006px;top:23.0px;font-size:9.6px;color:#1a1a1a;transform:translate(-50%,-50%) scaleX(0.84);transform-origin:50% 50%;">M0</div>
<div class="t d" style="left:82.95000000000002px;top:23.0px;font-size:9.6px;color:#1a1a1a;transform:translate(-50%,-50%) scaleX(0.84);transform-origin:50% 50%;">D50/2°</div>
<div class="t d" style="left:130.25px;top:23.0px;font-size:9.6px;color:#1a1a1a;transform:translate(-50%,-50%) scaleX(0.84);transform-origin:50% 50%;">28,39</div>
<div class="t d" style="left:177.54999999999995px;top:23.0px;font-size:9.6px;color:#1a1a1a;transform:translate(-50%,-50%) scaleX(0.84);transform-origin:50% 50%;">1,24</div>
<div class="t d" style="left:224.84999999999997px;top:23.0px;font-size:9.6px;color:#1a1a1a;transform:translate(-50%,-50%) scaleX(0.84);transform-origin:50% 50%;">-1,92</div>
<div class="t d" style="left:272.15px;top:23.0px;font-size:9.6px;color:#1a1a1a;transform:translate(-50%,-50%) scaleX(0.84);transform-origin:50% 50%;">4,29</div>
<div class="t d" style="left:319.44999999999993px;top:23.0px;font-size:9.6px;color:#1a1a1a;transform:translate(-50%,-50%) scaleX(0.84);transform-origin:50% 50%;">5,31</div>
<div class="t d" style="left:366.7499999999999px;top:23.0px;font-size:9.6px;color:#1a1a1a;transform:translate(-50%,-50%) scaleX(0.84);transform-origin:50% 50%;">5,70</div>
<div class="t d" style="left:414.04999999999995px;top:23.0px;font-size:9.6px;color:#1a1a1a;transform:translate(-50%,-50%) scaleX(0.84);transform-origin:50% 50%;">5,81</div>
<div class="t d" style="left:461.35px;top:23.0px;font-size:9.6px;color:#1a1a1a;transform:translate(-50%,-50%) scaleX(0.84);transform-origin:50% 50%;">5,84</div>
<div class="t d" style="left:508.65px;top:23.0px;font-size:9.6px;color:#1a1a1a;transform:translate(-50%,-50%) scaleX(0.84);transform-origin:50% 50%;">5,95</div>
<div class="t d" style="left:555.9499999999999px;top:23.0px;font-size:9.6px;color:#1a1a1a;transform:translate(-50%,-50%) scaleX(0.84);transform-origin:50% 50%;">6,10</div>
<div class="t d" style="left:603.2499999999999px;top:23.0px;font-size:9.6px;color:#1a1a1a;transform:translate(-50%,-50%) scaleX(0.84);transform-origin:50% 50%;">6,25</div>
<div class="ab" style="left:12px;top:30.5px;width:640px;height:15.5px;background:#ededed"></div>
<div class="ab" style="left:0px;top:30.5px;width:12.5px;height:15.5px;background:linear-gradient(90deg,#fafafa,#eeeff2)"></div>
<div class="ab" style="left:0px;top:45.0px;width:640px;height:1px;background:#e6e6e6"></div>
<div class="ab" style="left:12.0px;top:30.5px;width:1px;height:15.5px;background:#e4e4e4"></div>
<div class="ab" style="left:59.30000000000001px;top:30.5px;width:1px;height:15.5px;background:#e4e4e4"></div>
<div class="ab" style="left:106.60000000000002px;top:30.5px;width:1px;height:15.5px;background:#e4e4e4"></div>
<div class="ab" style="left:153.89999999999998px;top:30.5px;width:1px;height:15.5px;background:#e4e4e4"></div>
<div class="ab" style="left:201.2px;top:30.5px;width:1px;height:15.5px;background:#e4e4e4"></div>
<div class="ab" style="left:248.5px;top:30.5px;width:1px;height:15.5px;background:#e4e4e4"></div>
<div class="ab" style="left:295.79999999999995px;top:30.5px;width:1px;height:15.5px;background:#e4e4e4"></div>
<div class="ab" style="left:343.0999999999999px;top:30.5px;width:1px;height:15.5px;background:#e4e4e4"></div>
<div class="ab" style="left:390.4px;top:30.5px;width:1px;height:15.5px;background:#e4e4e4"></div>
<div class="ab" style="left:437.70000000000005px;top:30.5px;width:1px;height:15.5px;background:#e4e4e4"></div>
<div class="ab" style="left:485.0px;top:30.5px;width:1px;height:15.5px;background:#e4e4e4"></div>
<div class="ab" style="left:532.3px;top:30.5px;width:1px;height:15.5px;background:#e4e4e4"></div>
<div class="ab" style="left:579.5999999999999px;top:30.5px;width:1px;height:15.5px;background:#e4e4e4"></div>
<div class="ab" style="left:626.9px;top:30.5px;width:1px;height:15.5px;background:#e4e4e4"></div>
<div class="t d" style="left:35.650000000000006px;top:38.5px;font-size:9.6px;color:#1a1a1a;transform:translate(-50%,-50%) scaleX(0.84);transform-origin:50% 50%;">M0</div>
<div class="t d" style="left:82.95000000000002px;top:38.5px;font-size:9.6px;color:#1a1a1a;transform:translate(-50%,-50%) scaleX(0.84);transform-origin:50% 50%;">D50/2°</div>
<div class="t d" style="left:130.25px;top:38.5px;font-size:9.6px;color:#1a1a1a;transform:translate(-50%,-50%) scaleX(0.84);transform-origin:50% 50%;">25,53</div>
<div class="t d" style="left:177.54999999999995px;top:38.5px;font-size:9.6px;color:#1a1a1a;transform:translate(-50%,-50%) scaleX(0.84);transform-origin:50% 50%;">1,07</div>
<div class="t d" style="left:224.84999999999997px;top:38.5px;font-size:9.6px;color:#1a1a1a;transform:translate(-50%,-50%) scaleX(0.84);transform-origin:50% 50%;">-1,15</div>
<div class="t d" style="left:272.15px;top:38.5px;font-size:9.6px;color:#1a1a1a;transform:translate(-50%,-50%) scaleX(0.84);transform-origin:50% 50%;">3,54</div>
<div class="t d" style="left:319.44999999999993px;top:38.5px;font-size:9.6px;color:#1a1a1a;transform:translate(-50%,-50%) scaleX(0.84);transform-origin:50% 50%;">4,29</div>
<div class="t d" style="left:366.7499999999999px;top:38.5px;font-size:9.6px;color:#1a1a1a;transform:translate(-50%,-50%) scaleX(0.84);transform-origin:50% 50%;">4,59</div>
<div class="t d" style="left:414.04999999999995px;top:38.5px;font-size:9.6px;color:#1a1a1a;transform:translate(-50%,-50%) scaleX(0.84);transform-origin:50% 50%;">4,66</div>
<div class="t d" style="left:461.35px;top:38.5px;font-size:9.6px;color:#1a1a1a;transform:translate(-50%,-50%) scaleX(0.84);transform-origin:50% 50%;">4,65</div>
<div class="t d" style="left:508.65px;top:38.5px;font-size:9.6px;color:#1a1a1a;transform:translate(-50%,-50%) scaleX(0.84);transform-origin:50% 50%;">4,73</div>
<div class="t d" style="left:555.9499999999999px;top:38.5px;font-size:9.6px;color:#1a1a1a;transform:translate(-50%,-50%) scaleX(0.84);transform-origin:50% 50%;">4,85</div>
<div class="t d" style="left:603.2499999999999px;top:38.5px;font-size:9.6px;color:#1a1a1a;transform:translate(-50%,-50%) scaleX(0.84);transform-origin:50% 50%;">4,97</div>
<div class="ab" style="left:0px;top:46.0px;width:12.5px;height:15.5px;background:linear-gradient(90deg,#fafafa,#eeeff2)"></div>
<div class="ab" style="left:0px;top:60.5px;width:640px;height:1px;background:#e6e6e6"></div>
<div class="ab" style="left:12.0px;top:46.0px;width:1px;height:15.5px;background:#e4e4e4"></div>
<div class="ab" style="left:59.30000000000001px;top:46.0px;width:1px;height:15.5px;background:#e4e4e4"></div>
<div class="ab" style="left:106.60000000000002px;top:46.0px;width:1px;height:15.5px;background:#e4e4e4"></div>
<div class="ab" style="left:153.89999999999998px;top:46.0px;width:1px;height:15.5px;background:#e4e4e4"></div>
<div class="ab" style="left:201.2px;top:46.0px;width:1px;height:15.5px;background:#e4e4e4"></div>
<div class="ab" style="left:248.5px;top:46.0px;width:1px;height:15.5px;background:#e4e4e4"></div>
<div class="ab" style="left:295.79999999999995px;top:46.0px;width:1px;height:15.5px;background:#e4e4e4"></div>
<div class="ab" style="left:343.0999999999999px;top:46.0px;width:1px;height:15.5px;background:#e4e4e4"></div>
<div class="ab" style="left:390.4px;top:46.0px;width:1px;height:15.5px;background:#e4e4e4"></div>
<div class="ab" style="left:437.70000000000005px;top:46.0px;width:1px;height:15.5px;background:#e4e4e4"></div>
<div class="ab" style="left:485.0px;top:46.0px;width:1px;height:15.5px;background:#e4e4e4"></div>
<div class="ab" style="left:532.3px;top:46.0px;width:1px;height:15.5px;background:#e4e4e4"></div>
<div class="ab" style="left:579.5999999999999px;top:46.0px;width:1px;height:15.5px;background:#e4e4e4"></div>
<div class="ab" style="left:626.9px;top:46.0px;width:1px;height:15.5px;background:#e4e4e4"></div>
<div class="t d" style="left:35.650000000000006px;top:54.0px;font-size:9.6px;color:#1a1a1a;transform:translate(-50%,-50%) scaleX(0.84);transform-origin:50% 50%;">M0</div>
<div class="t d" style="left:82.95000000000002px;top:54.0px;font-size:9.6px;color:#1a1a1a;transform:translate(-50%,-50%) scaleX(0.84);transform-origin:50% 50%;">D50/2°</div>
<div class="t d" style="left:130.25px;top:54.0px;font-size:9.6px;color:#1a1a1a;transform:translate(-50%,-50%) scaleX(0.84);transform-origin:50% 50%;">23,56</div>
<div class="t d" style="left:177.54999999999995px;top:54.0px;font-size:9.6px;color:#1a1a1a;transform:translate(-50%,-50%) scaleX(0.84);transform-origin:50% 50%;">1,00</div>
<div class="t d" style="left:224.84999999999997px;top:54.0px;font-size:9.6px;color:#1a1a1a;transform:translate(-50%,-50%) scaleX(0.84);transform-origin:50% 50%;">-0,53</div>
<div class="t d" style="left:272.15px;top:54.0px;font-size:9.6px;color:#1a1a1a;transform:translate(-50%,-50%) scaleX(0.84);transform-origin:50% 50%;">3,09</div>
<div class="t d" style="left:319.44999999999993px;top:54.0px;font-size:9.6px;color:#1a1a1a;transform:translate(-50%,-50%) scaleX(0.84);transform-origin:50% 50%;">3,68</div>
<div class="t d" style="left:366.7499999999999px;top:54.0px;font-size:9.6px;color:#1a1a1a;transform:translate(-50%,-50%) scaleX(0.84);transform-origin:50% 50%;">3,92</div>
<div class="t d" style="left:414.04999999999995px;top:54.0px;font-size:9.6px;color:#1a1a1a;transform:translate(-50%,-50%) scaleX(0.84);transform-origin:50% 50%;">3,96</div>
<div class="t d" style="left:461.35px;top:54.0px;font-size:9.6px;color:#1a1a1a;transform:translate(-50%,-50%) scaleX(0.84);transform-origin:50% 50%;">3,93</div>
<div class="t d" style="left:508.65px;top:54.0px;font-size:9.6px;color:#1a1a1a;transform:translate(-50%,-50%) scaleX(0.84);transform-origin:50% 50%;">3,97</div>
<div class="t d" style="left:555.9499999999999px;top:54.0px;font-size:9.6px;color:#1a1a1a;transform:translate(-50%,-50%) scaleX(0.84);transform-origin:50% 50%;">4,08</div>
<div class="t d" style="left:603.2499999999999px;top:54.0px;font-size:9.6px;color:#1a1a1a;transform:translate(-50%,-50%) scaleX(0.84);transform-origin:50% 50%;">4,18</div>
<div class="ab" style="left:12px;top:61.5px;width:640px;height:15.5px;background:#ededed"></div>
<div class="ab" style="left:0px;top:61.5px;width:12.5px;height:15.5px;background:linear-gradient(90deg,#fafafa,#eeeff2)"></div>
<div class="ab" style="left:0px;top:76.0px;width:640px;height:1px;background:#e6e6e6"></div>
<div class="ab" style="left:12.0px;top:61.5px;width:1px;height:15.5px;background:#e4e4e4"></div>
<div class="ab" style="left:59.30000000000001px;top:61.5px;width:1px;height:15.5px;background:#e4e4e4"></div>
<div class="ab" style="left:106.60000000000002px;top:61.5px;width:1px;height:15.5px;background:#e4e4e4"></div>
<div class="ab" style="left:153.89999999999998px;top:61.5px;width:1px;height:15.5px;background:#e4e4e4"></div>
<div class="ab" style="left:201.2px;top:61.5px;width:1px;height:15.5px;background:#e4e4e4"></div>
<div class="ab" style="left:248.5px;top:61.5px;width:1px;height:15.5px;background:#e4e4e4"></div>
<div class="ab" style="left:295.79999999999995px;top:61.5px;width:1px;height:15.5px;background:#e4e4e4"></div>
<div class="ab" style="left:343.0999999999999px;top:61.5px;width:1px;height:15.5px;background:#e4e4e4"></div>
<div class="ab" style="left:390.4px;top:61.5px;width:1px;height:15.5px;background:#e4e4e4"></div>
<div class="ab" style="left:437.70000000000005px;top:61.5px;width:1px;height:15.5px;background:#e4e4e4"></div>
<div class="ab" style="left:485.0px;top:61.5px;width:1px;height:15.5px;background:#e4e4e4"></div>
<div class="ab" style="left:532.3px;top:61.5px;width:1px;height:15.5px;background:#e4e4e4"></div>
<div class="ab" style="left:579.5999999999999px;top:61.5px;width:1px;height:15.5px;background:#e4e4e4"></div>
<div class="ab" style="left:626.9px;top:61.5px;width:1px;height:15.5px;background:#e4e4e4"></div>
<div class="t d" style="left:35.650000000000006px;top:69.5px;font-size:9.6px;color:#1a1a1a;transform:translate(-50%,-50%) scaleX(0.84);transform-origin:50% 50%;">M0</div>
<div class="t d" style="left:82.95000000000002px;top:69.5px;font-size:9.6px;color:#1a1a1a;transform:translate(-50%,-50%) scaleX(0.84);transform-origin:50% 50%;">D50/2°</div>
<div class="t d" style="left:130.25px;top:69.5px;font-size:9.6px;color:#1a1a1a;transform:translate(-50%,-50%) scaleX(0.84);transform-origin:50% 50%;">20,61</div>
<div class="t d" style="left:177.54999999999995px;top:69.5px;font-size:9.6px;color:#1a1a1a;transform:translate(-50%,-50%) scaleX(0.84);transform-origin:50% 50%;">0,70</div>
<div class="t d" style="left:224.84999999999997px;top:69.5px;font-size:9.6px;color:#1a1a1a;transform:translate(-50%,-50%) scaleX(0.84);transform-origin:50% 50%;">0,76</div>
<div class="t d" style="left:272.15px;top:69.5px;font-size:9.6px;color:#1a1a1a;transform:translate(-50%,-50%) scaleX(0.84);transform-origin:50% 50%;">2,44</div>
<div class="t d" style="left:319.44999999999993px;top:69.5px;font-size:9.6px;color:#1a1a1a;transform:translate(-50%,-50%) scaleX(0.84);transform-origin:50% 50%;">2,79</div>
<div class="t d" style="left:366.7499999999999px;top:69.5px;font-size:9.6px;color:#1a1a1a;transform:translate(-50%,-50%) scaleX(0.84);transform-origin:50% 50%;">2,96</div>
<div class="t d" style="left:414.04999999999995px;top:69.5px;font-size:9.6px;color:#1a1a1a;transform:translate(-50%,-50%) scaleX(0.84);transform-origin:50% 50%;">2,97</div>
<div class="t d" style="left:461.35px;top:69.5px;font-size:9.6px;color:#1a1a1a;transform:translate(-50%,-50%) scaleX(0.84);transform-origin:50% 50%;">2,92</div>
<div class="t d" style="left:508.65px;top:69.5px;font-size:9.6px;color:#1a1a1a;transform:translate(-50%,-50%) scaleX(0.84);transform-origin:50% 50%;">2,94</div>
<div class="t d" style="left:555.9499999999999px;top:69.5px;font-size:9.6px;color:#1a1a1a;transform:translate(-50%,-50%) scaleX(0.84);transform-origin:50% 50%;">3,04</div>
<div class="t d" style="left:603.2499999999999px;top:69.5px;font-size:9.6px;color:#1a1a1a;transform:translate(-50%,-50%) scaleX(0.84);transform-origin:50% 50%;">3,12</div>
<div class="ab" style="left:0px;top:77.0px;width:12.5px;height:15.5px;background:linear-gradient(90deg,#fafafa,#eeeff2)"></div>
<div class="ab" style="left:0px;top:91.5px;width:640px;height:1px;background:#e6e6e6"></div>
<div class="ab" style="left:12.0px;top:77.0px;width:1px;height:15.5px;background:#e4e4e4"></div>
<div class="ab" style="left:59.30000000000001px;top:77.0px;width:1px;height:15.5px;background:#e4e4e4"></div>
<div class="ab" style="left:106.60000000000002px;top:77.0px;width:1px;height:15.5px;background:#e4e4e4"></div>
<div class="ab" style="left:153.89999999999998px;top:77.0px;width:1px;height:15.5px;background:#e4e4e4"></div>
<div class="ab" style="left:201.2px;top:77.0px;width:1px;height:15.5px;background:#e4e4e4"></div>
<div class="ab" style="left:248.5px;top:77.0px;width:1px;height:15.5px;background:#e4e4e4"></div>
<div class="ab" style="left:295.79999999999995px;top:77.0px;width:1px;height:15.5px;background:#e4e4e4"></div>
<div class="ab" style="left:343.0999999999999px;top:77.0px;width:1px;height:15.5px;background:#e4e4e4"></div>
<div class="ab" style="left:390.4px;top:77.0px;width:1px;height:15.5px;background:#e4e4e4"></div>
<div class="ab" style="left:437.70000000000005px;top:77.0px;width:1px;height:15.5px;background:#e4e4e4"></div>
<div class="ab" style="left:485.0px;top:77.0px;width:1px;height:15.5px;background:#e4e4e4"></div>
<div class="ab" style="left:532.3px;top:77.0px;width:1px;height:15.5px;background:#e4e4e4"></div>
<div class="ab" style="left:579.5999999999999px;top:77.0px;width:1px;height:15.5px;background:#e4e4e4"></div>
<div class="ab" style="left:626.9px;top:77.0px;width:1px;height:15.5px;background:#e4e4e4"></div>
<div class="t d" style="left:35.650000000000006px;top:85.0px;font-size:9.6px;color:#1a1a1a;transform:translate(-50%,-50%) scaleX(0.84);transform-origin:50% 50%;">M0</div>
<div class="t d" style="left:82.95000000000002px;top:85.0px;font-size:9.6px;color:#1a1a1a;transform:translate(-50%,-50%) scaleX(0.84);transform-origin:50% 50%;">D50/2°</div>
<div class="t d" style="left:130.25px;top:85.0px;font-size:9.6px;color:#1a1a1a;transform:translate(-50%,-50%) scaleX(0.84);transform-origin:50% 50%;">18,59</div>
<div class="t d" style="left:177.54999999999995px;top:85.0px;font-size:9.6px;color:#1a1a1a;transform:translate(-50%,-50%) scaleX(0.84);transform-origin:50% 50%;">0,87</div>
<div class="t d" style="left:224.84999999999997px;top:85.0px;font-size:9.6px;color:#1a1a1a;transform:translate(-50%,-50%) scaleX(0.84);transform-origin:50% 50%;">1,37</div>
<div class="t d" style="left:272.15px;top:85.0px;font-size:9.6px;color:#1a1a1a;transform:translate(-50%,-50%) scaleX(0.84);transform-origin:50% 50%;">2,08</div>
<div class="t d" style="left:319.44999999999993px;top:85.0px;font-size:9.6px;color:#1a1a1a;transform:translate(-50%,-50%) scaleX(0.84);transform-origin:50% 50%;">2,30</div>
<div class="t d" style="left:366.7499999999999px;top:85.0px;font-size:9.6px;color:#1a1a1a;transform:translate(-50%,-50%) scaleX(0.84);transform-origin:50% 50%;">2,43</div>
<div class="t d" style="left:414.04999999999995px;top:85.0px;font-size:9.6px;color:#1a1a1a;transform:translate(-50%,-50%) scaleX(0.84);transform-origin:50% 50%;">2,44</div>
<div class="t d" style="left:461.35px;top:85.0px;font-size:9.6px;color:#1a1a1a;transform:translate(-50%,-50%) scaleX(0.84);transform-origin:50% 50%;">2,38</div>
<div class="t d" style="left:508.65px;top:85.0px;font-size:9.6px;color:#1a1a1a;transform:translate(-50%,-50%) scaleX(0.84);transform-origin:50% 50%;">2,41</div>
<div class="t d" style="left:555.9499999999999px;top:85.0px;font-size:9.6px;color:#1a1a1a;transform:translate(-50%,-50%) scaleX(0.84);transform-origin:50% 50%;">2,48</div>
<div class="t d" style="left:603.2499999999999px;top:85.0px;font-size:9.6px;color:#1a1a1a;transform:translate(-50%,-50%) scaleX(0.84);transform-origin:50% 50%;">2,53</div>
<div class="ab" style="left:12px;top:92.5px;width:640px;height:15.5px;background:#ededed"></div>
<div class="ab" style="left:0px;top:92.5px;width:12.5px;height:15.5px;background:linear-gradient(90deg,#fafafa,#eeeff2)"></div>
<div class="ab" style="left:0px;top:107.0px;width:640px;height:1px;background:#e6e6e6"></div>
<div class="ab" style="left:12.0px;top:92.5px;width:1px;height:15.5px;background:#e4e4e4"></div>
<div class="ab" style="left:59.30000000000001px;top:92.5px;width:1px;height:15.5px;background:#e4e4e4"></div>
<div class="ab" style="left:106.60000000000002px;top:92.5px;width:1px;height:15.5px;background:#e4e4e4"></div>
<div class="ab" style="left:153.89999999999998px;top:92.5px;width:1px;height:15.5px;background:#e4e4e4"></div>
<div class="ab" style="left:201.2px;top:92.5px;width:1px;height:15.5px;background:#e4e4e4"></div>
<div class="ab" style="left:248.5px;top:92.5px;width:1px;height:15.5px;background:#e4e4e4"></div>
<div class="ab" style="left:295.79999999999995px;top:92.5px;width:1px;height:15.5px;background:#e4e4e4"></div>
<div class="ab" style="left:343.0999999999999px;top:92.5px;width:1px;height:15.5px;background:#e4e4e4"></div>
<div class="ab" style="left:390.4px;top:92.5px;width:1px;height:15.5px;background:#e4e4e4"></div>
<div class="ab" style="left:437.70000000000005px;top:92.5px;width:1px;height:15.5px;background:#e4e4e4"></div>
<div class="ab" style="left:485.0px;top:92.5px;width:1px;height:15.5px;background:#e4e4e4"></div>
<div class="ab" style="left:532.3px;top:92.5px;width:1px;height:15.5px;background:#e4e4e4"></div>
<div class="ab" style="left:579.5999999999999px;top:92.5px;width:1px;height:15.5px;background:#e4e4e4"></div>
<div class="ab" style="left:626.9px;top:92.5px;width:1px;height:15.5px;background:#e4e4e4"></div>
<div class="t d" style="left:35.650000000000006px;top:100.5px;font-size:9.6px;color:#1a1a1a;transform:translate(-50%,-50%) scaleX(0.84);transform-origin:50% 50%;">M0</div>
<div class="t d" style="left:82.95000000000002px;top:100.5px;font-size:9.6px;color:#1a1a1a;transform:translate(-50%,-50%) scaleX(0.84);transform-origin:50% 50%;">D50/2°</div>
<div class="t d" style="left:130.25px;top:100.5px;font-size:9.6px;color:#1a1a1a;transform:translate(-50%,-50%) scaleX(0.84);transform-origin:50% 50%;">17,14</div>
<div class="t d" style="left:177.54999999999995px;top:100.5px;font-size:9.6px;color:#1a1a1a;transform:translate(-50%,-50%) scaleX(0.84);transform-origin:50% 50%;">0,79</div>
<div class="t d" style="left:224.84999999999997px;top:100.5px;font-size:9.6px;color:#1a1a1a;transform:translate(-50%,-50%) scaleX(0.84);transform-origin:50% 50%;">1,44</div>
<div class="t d" style="left:272.15px;top:100.5px;font-size:9.6px;color:#1a1a1a;transform:translate(-50%,-50%) scaleX(0.84);transform-origin:50% 50%;">1,92</div>
<div class="t d" style="left:319.44999999999993px;top:100.5px;font-size:9.6px;color:#1a1a1a;transform:translate(-50%,-50%) scaleX(0.84);transform-origin:50% 50%;">2,07</div>
<div class="t d" style="left:366.7499999999999px;top:100.5px;font-size:9.6px;color:#1a1a1a;transform:translate(-50%,-50%) scaleX(0.84);transform-origin:50% 50%;">2,18</div>
<div class="t d" style="left:414.04999999999995px;top:100.5px;font-size:9.6px;color:#1a1a1a;transform:translate(-50%,-50%) scaleX(0.84);transform-origin:50% 50%;">2,17</div>
<div class="t d" style="left:461.35px;top:100.5px;font-size:9.6px;color:#1a1a1a;transform:translate(-50%,-50%) scaleX(0.84);transform-origin:50% 50%;">2,11</div>
<div class="t d" style="left:508.65px;top:100.5px;font-size:9.6px;color:#1a1a1a;transform:translate(-50%,-50%) scaleX(0.84);transform-origin:50% 50%;">2,11</div>
<div class="t d" style="left:555.9499999999999px;top:100.5px;font-size:9.6px;color:#1a1a1a;transform:translate(-50%,-50%) scaleX(0.84);transform-origin:50% 50%;">2,17</div>
<div class="t d" style="left:603.2499999999999px;top:100.5px;font-size:9.6px;color:#1a1a1a;transform:translate(-50%,-50%) scaleX(0.84);transform-origin:50% 50%;">2,19</div>
<div class="ab" style="left:0px;top:108.0px;width:12.5px;height:15.5px;background:linear-gradient(90deg,#fafafa,#eeeff2)"></div>
<div class="ab" style="left:0px;top:122.5px;width:640px;height:1px;background:#e6e6e6"></div>
<div class="ab" style="left:12.0px;top:108.0px;width:1px;height:15.5px;background:#e4e4e4"></div>
<div class="ab" style="left:59.30000000000001px;top:108.0px;width:1px;height:15.5px;background:#e4e4e4"></div>
<div class="ab" style="left:106.60000000000002px;top:108.0px;width:1px;height:15.5px;background:#e4e4e4"></div>
<div class="ab" style="left:153.89999999999998px;top:108.0px;width:1px;height:15.5px;background:#e4e4e4"></div>
<div class="ab" style="left:201.2px;top:108.0px;width:1px;height:15.5px;background:#e4e4e4"></div>
<div class="ab" style="left:248.5px;top:108.0px;width:1px;height:15.5px;background:#e4e4e4"></div>
<div class="ab" style="left:295.79999999999995px;top:108.0px;width:1px;height:15.5px;background:#e4e4e4"></div>
<div class="ab" style="left:343.0999999999999px;top:108.0px;width:1px;height:15.5px;background:#e4e4e4"></div>
<div class="ab" style="left:390.4px;top:108.0px;width:1px;height:15.5px;background:#e4e4e4"></div>
<div class="ab" style="left:437.70000000000005px;top:108.0px;width:1px;height:15.5px;background:#e4e4e4"></div>
<div class="ab" style="left:485.0px;top:108.0px;width:1px;height:15.5px;background:#e4e4e4"></div>
<div class="ab" style="left:532.3px;top:108.0px;width:1px;height:15.5px;background:#e4e4e4"></div>
<div class="ab" style="left:579.5999999999999px;top:108.0px;width:1px;height:15.5px;background:#e4e4e4"></div>
<div class="ab" style="left:626.9px;top:108.0px;width:1px;height:15.5px;background:#e4e4e4"></div>
<div class="t d" style="left:35.650000000000006px;top:116.0px;font-size:9.6px;color:#1a1a1a;transform:translate(-50%,-50%) scaleX(0.84);transform-origin:50% 50%;">M0</div>
<div class="t d" style="left:82.95000000000002px;top:116.0px;font-size:9.6px;color:#1a1a1a;transform:translate(-50%,-50%) scaleX(0.84);transform-origin:50% 50%;">D50/2°</div>
<div class="t d" style="left:130.25px;top:116.0px;font-size:9.6px;color:#1a1a1a;transform:translate(-50%,-50%) scaleX(0.84);transform-origin:50% 50%;">91,20</div>
<div class="t d" style="left:177.54999999999995px;top:116.0px;font-size:9.6px;color:#1a1a1a;transform:translate(-50%,-50%) scaleX(0.84);transform-origin:50% 50%;">-5,49</div>
<div class="t d" style="left:224.84999999999997px;top:116.0px;font-size:9.6px;color:#1a1a1a;transform:translate(-50%,-50%) scaleX(0.84);transform-origin:50% 50%;">106,59</div>
<div class="t d" style="left:272.15px;top:116.0px;font-size:9.6px;color:#1a1a1a;transform:translate(-50%,-50%) scaleX(0.84);transform-origin:50% 50%;">5,65</div>
<div class="t d" style="left:319.44999999999993px;top:116.0px;font-size:9.6px;color:#1a1a1a;transform:translate(-50%,-50%) scaleX(0.84);transform-origin:50% 50%;">3,41</div>
<div class="t d" style="left:366.7499999999999px;top:116.0px;font-size:9.6px;color:#1a1a1a;transform:translate(-50%,-50%) scaleX(0.84);transform-origin:50% 50%;">2,48</div>
<div class="t d" style="left:414.04999999999995px;top:116.0px;font-size:9.6px;color:#1a1a1a;transform:translate(-50%,-50%) scaleX(0.84);transform-origin:50% 50%;">2,73</div>
<div class="t d" style="left:461.35px;top:116.0px;font-size:9.6px;color:#1a1a1a;transform:translate(-50%,-50%) scaleX(0.84);transform-origin:50% 50%;">3,18</div>
<div class="t d" style="left:508.65px;top:116.0px;font-size:9.6px;color:#1a1a1a;transform:translate(-50%,-50%) scaleX(0.84);transform-origin:50% 50%;">3,42</div>
<div class="t d" style="left:555.9499999999999px;top:116.0px;font-size:9.6px;color:#1a1a1a;transform:translate(-50%,-50%) scaleX(0.84);transform-origin:50% 50%;">3,05</div>
<div class="t d" style="left:603.2499999999999px;top:116.0px;font-size:9.6px;color:#1a1a1a;transform:translate(-50%,-50%) scaleX(0.84);transform-origin:50% 50%;">2,41</div>
<div class="ab" style="left:12px;top:123.5px;width:640px;height:15.5px;background:#ededed"></div>
<div class="ab" style="left:0px;top:123.5px;width:12.5px;height:15.5px;background:linear-gradient(90deg,#fafafa,#eeeff2)"></div>
<div class="ab" style="left:0px;top:138.0px;width:640px;height:1px;background:#e6e6e6"></div>
<div class="ab" style="left:12.0px;top:123.5px;width:1px;height:15.5px;background:#e4e4e4"></div>
<div class="ab" style="left:59.30000000000001px;top:123.5px;width:1px;height:15.5px;background:#e4e4e4"></div>
<div class="ab" style="left:106.60000000000002px;top:123.5px;width:1px;height:15.5px;background:#e4e4e4"></div>
<div class="ab" style="left:153.89999999999998px;top:123.5px;width:1px;height:15.5px;background:#e4e4e4"></div>
<div class="ab" style="left:201.2px;top:123.5px;width:1px;height:15.5px;background:#e4e4e4"></div>
<div class="ab" style="left:248.5px;top:123.5px;width:1px;height:15.5px;background:#e4e4e4"></div>
<div class="ab" style="left:295.79999999999995px;top:123.5px;width:1px;height:15.5px;background:#e4e4e4"></div>
<div class="ab" style="left:343.0999999999999px;top:123.5px;width:1px;height:15.5px;background:#e4e4e4"></div>
<div class="ab" style="left:390.4px;top:123.5px;width:1px;height:15.5px;background:#e4e4e4"></div>
<div class="ab" style="left:437.70000000000005px;top:123.5px;width:1px;height:15.5px;background:#e4e4e4"></div>
<div class="ab" style="left:485.0px;top:123.5px;width:1px;height:15.5px;background:#e4e4e4"></div>
<div class="ab" style="left:532.3px;top:123.5px;width:1px;height:15.5px;background:#e4e4e4"></div>
<div class="ab" style="left:579.5999999999999px;top:123.5px;width:1px;height:15.5px;background:#e4e4e4"></div>
<div class="ab" style="left:626.9px;top:123.5px;width:1px;height:15.5px;background:#e4e4e4"></div>
<div class="t d" style="left:35.650000000000006px;top:131.5px;font-size:9.6px;color:#1a1a1a;transform:translate(-50%,-50%) scaleX(0.84);transform-origin:50% 50%;">M0</div>
<div class="t d" style="left:82.95000000000002px;top:131.5px;font-size:9.6px;color:#1a1a1a;transform:translate(-50%,-50%) scaleX(0.84);transform-origin:50% 50%;">D50/2°</div>
<div class="t d" style="left:130.25px;top:131.5px;font-size:9.6px;color:#1a1a1a;transform:translate(-50%,-50%) scaleX(0.84);transform-origin:50% 50%;">62,70</div>
<div class="t d" style="left:177.54999999999995px;top:131.5px;font-size:9.6px;color:#1a1a1a;transform:translate(-50%,-50%) scaleX(0.84);transform-origin:50% 50%;">62,18</div>
<div class="t d" style="left:224.84999999999997px;top:131.5px;font-size:9.6px;color:#1a1a1a;transform:translate(-50%,-50%) scaleX(0.84);transform-origin:50% 50%;">-18,73</div>
<div class="t d" style="left:272.15px;top:131.5px;font-size:9.6px;color:#1a1a1a;transform:translate(-50%,-50%) scaleX(0.84);transform-origin:50% 50%;">46,14</div>
<div class="t d" style="left:319.44999999999993px;top:131.5px;font-size:9.6px;color:#1a1a1a;transform:translate(-50%,-50%) scaleX(0.84);transform-origin:50% 50%;">50,46</div>
<div class="t d" style="left:366.7499999999999px;top:131.5px;font-size:9.6px;color:#1a1a1a;transform:translate(-50%,-50%) scaleX(0.84);transform-origin:50% 50%;">52,05</div>
<div class="t d" style="left:414.04999999999995px;top:131.5px;font-size:9.6px;color:#1a1a1a;transform:translate(-50%,-50%) scaleX(0.84);transform-origin:50% 50%;">52,79</div>
<div class="t d" style="left:461.35px;top:131.5px;font-size:9.6px;color:#1a1a1a;transform:translate(-50%,-50%) scaleX(0.84);transform-origin:50% 50%;">53,02</div>
<div class="t d" style="left:508.65px;top:131.5px;font-size:9.6px;color:#1a1a1a;transform:translate(-50%,-50%) scaleX(0.84);transform-origin:50% 50%;">51,99</div>
<div class="t d" style="left:555.9499999999999px;top:131.5px;font-size:9.6px;color:#1a1a1a;transform:translate(-50%,-50%) scaleX(0.84);transform-origin:50% 50%;">48,91</div>
<div class="t d" style="left:603.2499999999999px;top:131.5px;font-size:9.6px;color:#1a1a1a;transform:translate(-50%,-50%) scaleX(0.84);transform-origin:50% 50%;">43,9</div>
<div class="ab" style="left:0px;top:139.0px;width:12.5px;height:15.5px;background:linear-gradient(90deg,#fafafa,#eeeff2)"></div>
<div class="ab" style="left:0px;top:153.5px;width:640px;height:1px;background:#e6e6e6"></div>
<div class="ab" style="left:12.0px;top:139.0px;width:1px;height:15.5px;background:#e4e4e4"></div>
<div class="ab" style="left:59.30000000000001px;top:139.0px;width:1px;height:15.5px;background:#e4e4e4"></div>
<div class="ab" style="left:106.60000000000002px;top:139.0px;width:1px;height:15.5px;background:#e4e4e4"></div>
<div class="ab" style="left:153.89999999999998px;top:139.0px;width:1px;height:15.5px;background:#e4e4e4"></div>
<div class="ab" style="left:201.2px;top:139.0px;width:1px;height:15.5px;background:#e4e4e4"></div>
<div class="ab" style="left:248.5px;top:139.0px;width:1px;height:15.5px;background:#e4e4e4"></div>
<div class="ab" style="left:295.79999999999995px;top:139.0px;width:1px;height:15.5px;background:#e4e4e4"></div>
<div class="ab" style="left:343.0999999999999px;top:139.0px;width:1px;height:15.5px;background:#e4e4e4"></div>
<div class="ab" style="left:390.4px;top:139.0px;width:1px;height:15.5px;background:#e4e4e4"></div>
<div class="ab" style="left:437.70000000000005px;top:139.0px;width:1px;height:15.5px;background:#e4e4e4"></div>
<div class="ab" style="left:485.0px;top:139.0px;width:1px;height:15.5px;background:#e4e4e4"></div>
<div class="ab" style="left:532.3px;top:139.0px;width:1px;height:15.5px;background:#e4e4e4"></div>
<div class="ab" style="left:579.5999999999999px;top:139.0px;width:1px;height:15.5px;background:#e4e4e4"></div>
<div class="ab" style="left:626.9px;top:139.0px;width:1px;height:15.5px;background:#e4e4e4"></div>
<div class="t d" style="left:35.650000000000006px;top:147.0px;font-size:9.6px;color:#1a1a1a;transform:translate(-50%,-50%) scaleX(0.84);transform-origin:50% 50%;">M0</div>
<div class="t d" style="left:82.95000000000002px;top:147.0px;font-size:9.6px;color:#1a1a1a;transform:translate(-50%,-50%) scaleX(0.84);transform-origin:50% 50%;">D50/2°</div>
<div class="t d" style="left:130.25px;top:147.0px;font-size:9.6px;color:#1a1a1a;transform:translate(-50%,-50%) scaleX(0.84);transform-origin:50% 50%;">49,25</div>
<div class="t d" style="left:177.54999999999995px;top:147.0px;font-size:9.6px;color:#1a1a1a;transform:translate(-50%,-50%) scaleX(0.84);transform-origin:50% 50%;">-58,63</div>
<div class="t d" style="left:224.84999999999997px;top:147.0px;font-size:9.6px;color:#1a1a1a;transform:translate(-50%,-50%) scaleX(0.84);transform-origin:50% 50%;">10,03</div>
<div class="t d" style="left:272.15px;top:147.0px;font-size:9.6px;color:#1a1a1a;transform:translate(-50%,-50%) scaleX(0.84);transform-origin:50% 50%;">7,07</div>
<div class="t d" style="left:319.44999999999993px;top:147.0px;font-size:9.6px;color:#1a1a1a;transform:translate(-50%,-50%) scaleX(0.84);transform-origin:50% 50%;">8,27</div>
<div class="t d" style="left:366.7499999999999px;top:147.0px;font-size:9.6px;color:#1a1a1a;transform:translate(-50%,-50%) scaleX(0.84);transform-origin:50% 50%;">8,78</div>
<div class="t d" style="left:414.04999999999995px;top:147.0px;font-size:9.6px;color:#1a1a1a;transform:translate(-50%,-50%) scaleX(0.84);transform-origin:50% 50%;">8,77</div>
<div class="t d" style="left:461.35px;top:147.0px;font-size:9.6px;color:#1a1a1a;transform:translate(-50%,-50%) scaleX(0.84);transform-origin:50% 50%;">8,27</div>
<div class="t d" style="left:508.65px;top:147.0px;font-size:9.6px;color:#1a1a1a;transform:translate(-50%,-50%) scaleX(0.84);transform-origin:50% 50%;">8,76</div>
<div class="t d" style="left:555.9499999999999px;top:147.0px;font-size:9.6px;color:#1a1a1a;transform:translate(-50%,-50%) scaleX(0.84);transform-origin:50% 50%;">10,90</div>
<div class="t d" style="left:603.2499999999999px;top:147.0px;font-size:9.6px;color:#1a1a1a;transform:translate(-50%,-50%) scaleX(0.84);transform-origin:50% 50%;">14,4</div>
<div class="ab" style="left:12px;top:154.5px;width:640px;height:15.5px;background:#9aadcd"></div>
<div class="ab" style="left:0px;top:154.5px;width:12.5px;height:15.5px;background:linear-gradient(90deg,#fafafa,#eeeff2)"></div>
<div class="ab" style="left:0px;top:169.0px;width:640px;height:1px;background:#9aadcd"></div>
<div class="ab" style="left:12.0px;top:154.5px;width:1px;height:15.5px;background:#b7c4d9"></div>
<div class="ab" style="left:59.30000000000001px;top:154.5px;width:1px;height:15.5px;background:#b7c4d9"></div>
<div class="ab" style="left:106.60000000000002px;top:154.5px;width:1px;height:15.5px;background:#b7c4d9"></div>
<div class="ab" style="left:153.89999999999998px;top:154.5px;width:1px;height:15.5px;background:#b7c4d9"></div>
<div class="ab" style="left:201.2px;top:154.5px;width:1px;height:15.5px;background:#b7c4d9"></div>
<div class="ab" style="left:248.5px;top:154.5px;width:1px;height:15.5px;background:#b7c4d9"></div>
<div class="ab" style="left:295.79999999999995px;top:154.5px;width:1px;height:15.5px;background:#b7c4d9"></div>
<div class="ab" style="left:343.0999999999999px;top:154.5px;width:1px;height:15.5px;background:#b7c4d9"></div>
<div class="ab" style="left:390.4px;top:154.5px;width:1px;height:15.5px;background:#b7c4d9"></div>
<div class="ab" style="left:437.70000000000005px;top:154.5px;width:1px;height:15.5px;background:#b7c4d9"></div>
<div class="ab" style="left:485.0px;top:154.5px;width:1px;height:15.5px;background:#b7c4d9"></div>
<div class="ab" style="left:532.3px;top:154.5px;width:1px;height:15.5px;background:#b7c4d9"></div>
<div class="ab" style="left:579.5999999999999px;top:154.5px;width:1px;height:15.5px;background:#b7c4d9"></div>
<div class="ab" style="left:626.9px;top:154.5px;width:1px;height:15.5px;background:#b7c4d9"></div>
<div class="t d" style="left:35.650000000000006px;top:162.5px;font-size:9.6px;color:#1a1a1a;transform:translate(-50%,-50%) scaleX(0.84);transform-origin:50% 50%;">M0</div>
<div class="t d" style="left:82.95000000000002px;top:162.5px;font-size:9.6px;color:#1a1a1a;transform:translate(-50%,-50%) scaleX(0.84);transform-origin:50% 50%;">D50/2°</div>
<div class="t d" style="left:130.25px;top:162.5px;font-size:9.6px;color:#1a1a1a;transform:translate(-50%,-50%) scaleX(0.84);transform-origin:50% 50%;">30,68</div>
<div class="t d" style="left:177.54999999999995px;top:162.5px;font-size:9.6px;color:#1a1a1a;transform:translate(-50%,-50%) scaleX(0.84);transform-origin:50% 50%;">15,13</div>
<div class="t d" style="left:224.84999999999997px;top:162.5px;font-size:9.6px;color:#1a1a1a;transform:translate(-50%,-50%) scaleX(0.84);transform-origin:50% 50%;">-54,80</div>
<div class="t d" style="left:272.15px;top:162.5px;font-size:9.6px;color:#1a1a1a;transform:translate(-50%,-50%) scaleX(0.84);transform-origin:50% 50%;">18,21</div>
<div class="t d" style="left:319.44999999999993px;top:162.5px;font-size:9.6px;color:#1a1a1a;transform:translate(-50%,-50%) scaleX(0.84);transform-origin:50% 50%;">23,32</div>
<div class="t d" style="left:366.7499999999999px;top:162.5px;font-size:9.6px;color:#1a1a1a;transform:translate(-50%,-50%) scaleX(0.84);transform-origin:50% 50%;">26,15</div>
<div class="t d" style="left:414.04999999999995px;top:162.5px;font-size:9.6px;color:#1a1a1a;transform:translate(-50%,-50%) scaleX(0.84);transform-origin:50% 50%;">29,38</div>
<div class="t d" style="left:461.35px;top:162.5px;font-size:9.6px;color:#1a1a1a;transform:translate(-50%,-50%) scaleX(0.84);transform-origin:50% 50%;">34,02</div>
<div class="t d" style="left:508.65px;top:162.5px;font-size:9.6px;color:#1a1a1a;transform:translate(-50%,-50%) scaleX(0.84);transform-origin:50% 50%;">36,98</div>
<div class="t d" style="left:555.9499999999999px;top:162.5px;font-size:9.6px;color:#1a1a1a;transform:translate(-50%,-50%) scaleX(0.84);transform-origin:50% 50%;">36,10</div>
<div class="t d" style="left:603.2499999999999px;top:162.5px;font-size:9.6px;color:#1a1a1a;transform:translate(-50%,-50%) scaleX(0.84);transform-origin:50% 50%;">32,65</div>
<svg class="ab" style="left:5px;top:159.0px" width="5" height="7" viewBox="0 0 5 7"><path d="M1 1 L4 3.5 L1 6 Z" fill="#111"/></svg>
</div>
<div class="ab" style="left:781.5px;top:115px;width:13.5px;height:165px;background:#f0f0f0"></div>
<svg class="ab" style="left:785px;top:119.5px" width="6" height="4" viewBox="0 0 6 4"><path d="M0.5 3.5 L3 0.5 L5.5 3.5 Z" fill="#222"/></svg>
<div class="ab" style="left:783px;top:232.5px;width:10px;height:34px;border:1px solid #b2b2b2;border-radius:2px;background:linear-gradient(90deg,#f5f5f5,#d9d9d9)"></div>
<svg class="ab" style="left:785px;top:246px" width="6" height="6" viewBox="0 0 6 6"><path d="M0.5 1 H5.5 M0.5 3 H5.5 M0.5 5 H5.5" stroke="#666" stroke-width="0.7"/></svg>
<svg class="ab" style="left:785px;top:271px" width="6" height="4" viewBox="0 0 6 4"><path d="M0.5 0.5 L3 3.5 L5.5 0.5 Z" fill="#222"/></svg>
<div class="ab" style="left:171px;top:280px;width:624px;height:12px;background:#f0f0f0"></div>
<svg class="ab" style="left:175px;top:283.5px" width="4" height="6" viewBox="0 0 4 6"><path d="M3.5 0.5 L0.5 3 L3.5 5.5 Z" fill="#222"/></svg>
<div class="ab" style="left:185px;top:281px;width:203.5px;height:10.5px;border:1px solid #b2b2b2;border-radius:2px;background:linear-gradient(#f8f8f8,#d6d6d6)"></div>
<svg class="ab" style="left:284px;top:283px" width="6" height="6" viewBox="0 0 6 6"><path d="M1 0.5 V5.5 M3 0.5 V5.5 M5 0.5 V5.5" stroke="#555" stroke-width="0.7"/></svg>
<svg class="ab" style="left:774.5px;top:283.5px" width="4" height="6" viewBox="0 0 4 6"><path d="M0.5 0.5 L3.5 3 L0.5 5.5 Z" fill="#222"/></svg>
<div class="ab" style="left:171px;top:297.5px;width:624px;height:172.5px;overflow:hidden">
<div class="ab" style="left:0px;top:0px;width:640px;height:14.5px;background:#6b6b6b"></div>
<div class="ab" style="left:0px;top:14.5px;width:11.5px;height:15px;background:#6b6b6b"></div>
<div class="ab" style="left:11.0px;top:0px;width:1.3px;height:14.5px;background:#585858"></div>
<div class="ab" style="left:58.30000000000001px;top:0px;width:1.3px;height:14.5px;background:#585858"></div>
<div class="ab" style="left:105.60000000000002px;top:0px;width:1.3px;height:14.5px;background:#585858"></div>
<div class="ab" style="left:152.89999999999998px;top:0px;width:1.3px;height:14.5px;background:#585858"></div>
<div class="ab" style="left:200.2px;top:0px;width:1.3px;height:14.5px;background:#585858"></div>
<div class="ab" style="left:247.5px;top:0px;width:1.3px;height:14.5px;background:#585858"></div>
<div class="ab" style="left:294.79999999999995px;top:0px;width:1.3px;height:14.5px;background:#585858"></div>
<div class="ab" style="left:342.0999999999999px;top:0px;width:1.3px;height:14.5px;background:#585858"></div>
<div class="ab" style="left:389.4px;top:0px;width:1.3px;height:14.5px;background:#585858"></div>
<div class="ab" style="left:436.70000000000005px;top:0px;width:1.3px;height:14.5px;background:#585858"></div>
<div class="ab" style="left:484.0px;top:0px;width:1.3px;height:14.5px;background:#585858"></div>
<div class="ab" style="left:531.3px;top:0px;width:1.3px;height:14.5px;background:#585858"></div>
<div class="ab" style="left:578.5999999999999px;top:0px;width:1.3px;height:14.5px;background:#585858"></div>
<div class="ab" style="left:625.9px;top:0px;width:1.3px;height:14.5px;background:#585858"></div>
<div class="ab" style="left:11.5px;top:14.5px;width:640px;height:15px;background:#9aadcd"></div>
<div class="ab" style="left:11.5px;top:14.5px;width:1px;height:15px;background:#b7c4d9"></div>
<div class="ab" style="left:58.80000000000001px;top:14.5px;width:1px;height:15px;background:#b7c4d9"></div>
<div class="ab" style="left:106.10000000000002px;top:14.5px;width:1px;height:15px;background:#b7c4d9"></div>
<div class="ab" style="left:153.39999999999998px;top:14.5px;width:1px;height:15px;background:#b7c4d9"></div>
<div class="ab" style="left:200.7px;top:14.5px;width:1px;height:15px;background:#b7c4d9"></div>
<div class="ab" style="left:248.0px;top:14.5px;width:1px;height:15px;background:#b7c4d9"></div>
<div class="ab" style="left:295.29999999999995px;top:14.5px;width:1px;height:15px;background:#b7c4d9"></div>
<div class="ab" style="left:342.5999999999999px;top:14.5px;width:1px;height:15px;background:#b7c4d9"></div>
<div class="ab" style="left:389.9px;top:14.5px;width:1px;height:15px;background:#b7c4d9"></div>
<div class="ab" style="left:437.20000000000005px;top:14.5px;width:1px;height:15px;background:#b7c4d9"></div>
<div class="ab" style="left:484.5px;top:14.5px;width:1px;height:15px;background:#b7c4d9"></div>
<div class="ab" style="left:531.8px;top:14.5px;width:1px;height:15px;background:#b7c4d9"></div>
<div class="ab" style="left:579.0999999999999px;top:14.5px;width:1px;height:15px;background:#b7c4d9"></div>
<div class="ab" style="left:626.4px;top:14.5px;width:1px;height:15px;background:#b7c4d9"></div>
<div class="t w" style="left:35.150000000000006px;top:7.5px;font-size:9.6px;color:#f2f2f2;transform:translate(-50%,-50%) scaleX(0.84);transform-origin:50% 50%;">Test mode</div>
<div class="t w" style="left:82.45000000000002px;top:7.5px;font-size:9.6px;color:#f2f2f2;transform:translate(-50%,-50%) scaleX(0.84);transform-origin:50% 50%;">Light sour...</div>
<div class="t w" style="left:129.75px;top:7.5px;font-size:9.6px;color:#f2f2f2;transform:translate(-50%,-50%) scaleX(0.84);transform-origin:50% 50%;">L*</div>
<div class="t w" style="left:177.04999999999995px;top:7.5px;font-size:9.6px;color:#f2f2f2;transform:translate(-50%,-50%) scaleX(0.84);transform-origin:50% 50%;">a*</div>
<div class="t w" style="left:224.34999999999997px;top:7.5px;font-size:9.6px;color:#f2f2f2;transform:translate(-50%,-50%) scaleX(0.84);transform-origin:50% 50%;">b*</div>
<div class="t w" style="left:271.65px;top:7.5px;font-size:9.6px;color:#f2f2f2;transform:translate(-50%,-50%) scaleX(0.84);transform-origin:50% 50%;">400nm</div>
<div class="t w" style="left:318.94999999999993px;top:7.5px;font-size:9.6px;color:#f2f2f2;transform:translate(-50%,-50%) scaleX(0.84);transform-origin:50% 50%;">410nm</div>
<div class="t w" style="left:366.2499999999999px;top:7.5px;font-size:9.6px;color:#f2f2f2;transform:translate(-50%,-50%) scaleX(0.84);transform-origin:50% 50%;">420nm</div>
<div class="t w" style="left:413.54999999999995px;top:7.5px;font-size:9.6px;color:#f2f2f2;transform:translate(-50%,-50%) scaleX(0.84);transform-origin:50% 50%;">430nm</div>
<div class="t w" style="left:460.85px;top:7.5px;font-size:9.6px;color:#f2f2f2;transform:translate(-50%,-50%) scaleX(0.84);transform-origin:50% 50%;">440nm</div>
<div class="t w" style="left:508.15px;top:7.5px;font-size:9.6px;color:#f2f2f2;transform:translate(-50%,-50%) scaleX(0.84);transform-origin:50% 50%;">450nm</div>
<div class="t w" style="left:555.4499999999999px;top:7.5px;font-size:9.6px;color:#f2f2f2;transform:translate(-50%,-50%) scaleX(0.84);transform-origin:50% 50%;">460nm</div>
<div class="t w" style="left:602.7499999999999px;top:7.5px;font-size:9.6px;color:#f2f2f2;transform:translate(-50%,-50%) scaleX(0.84);transform-origin:50% 50%;">470nm</div>
<div class="t d" style="left:35.150000000000006px;top:22.3px;font-size:9.6px;color:#3c3c3c;transform:translate(-50%,-50%) scaleX(0.84);transform-origin:50% 50%;">M0</div>
<div class="t d" style="left:82.45000000000002px;top:22.3px;font-size:9.6px;color:#3c3c3c;transform:translate(-50%,-50%) scaleX(0.84);transform-origin:50% 50%;">D50/2°</div>
<div class="t d" style="left:129.75px;top:22.3px;font-size:9.6px;color:#3c3c3c;transform:translate(-50%,-50%) scaleX(0.84);transform-origin:50% 50%;">30,68</div>
<div class="t d" style="left:177.04999999999995px;top:22.3px;font-size:9.6px;color:#3c3c3c;transform:translate(-50%,-50%) scaleX(0.84);transform-origin:50% 50%;">15,13</div>
<div class="t d" style="left:224.34999999999997px;top:22.3px;font-size:9.6px;color:#3c3c3c;transform:translate(-50%,-50%) scaleX(0.84);transform-origin:50% 50%;">-54,80</div>
<div class="t d" style="left:271.65px;top:22.3px;font-size:9.6px;color:#3c3c3c;transform:translate(-50%,-50%) scaleX(0.84);transform-origin:50% 50%;">18,21</div>
<div class="t d" style="left:318.94999999999993px;top:22.3px;font-size:9.6px;color:#3c3c3c;transform:translate(-50%,-50%) scaleX(0.84);transform-origin:50% 50%;">23,32</div>
<div class="t d" style="left:366.2499999999999px;top:22.3px;font-size:9.6px;color:#3c3c3c;transform:translate(-50%,-50%) scaleX(0.84);transform-origin:50% 50%;">26,15</div>
<div class="t d" style="left:413.54999999999995px;top:22.3px;font-size:9.6px;color:#3c3c3c;transform:translate(-50%,-50%) scaleX(0.84);transform-origin:50% 50%;">29,38</div>
<div class="t d" style="left:460.85px;top:22.3px;font-size:9.6px;color:#3c3c3c;transform:translate(-50%,-50%) scaleX(0.84);transform-origin:50% 50%;">34,02</div>
<div class="t d" style="left:508.15px;top:22.3px;font-size:9.6px;color:#3c3c3c;transform:translate(-50%,-50%) scaleX(0.84);transform-origin:50% 50%;">36,98</div>
<div class="t d" style="left:555.4499999999999px;top:22.3px;font-size:9.6px;color:#3c3c3c;transform:translate(-50%,-50%) scaleX(0.84);transform-origin:50% 50%;">36,10</div>
<div class="t d" style="left:602.7499999999999px;top:22.3px;font-size:9.6px;color:#3c3c3c;transform:translate(-50%,-50%) scaleX(0.84);transform-origin:50% 50%;">32,65</div>
<svg class="ab" style="left:3.5px;top:19px" width="5" height="7" viewBox="0 0 5 7"><path d="M1 1 L4 3.5 L1 6 Z" fill="#d8d8d8"/></svg>
</div>
<div class="ab" style="left:171px;top:470px;width:624px;height:12px;background:linear-gradient(#d8d8d8,#c4c4c4)"></div>
<svg class="ab" style="left:175px;top:472px" width="6" height="8" viewBox="0 0 6 8"><path d="M5 0.5 L1 4 L5 7.5 Z" fill="#333"/></svg>
<div class="ab" style="left:183.5px;top:470.5px;width:214.5px;height:11px;border:1px solid #8c8c8c;border-radius:2px;background:linear-gradient(#f0f0f0,#c8c8c8)"></div>
<svg class="ab" style="left:287px;top:473px" width="6" height="6" viewBox="0 0 6 6"><path d="M1 0.5 V5.5 M3 0.5 V5.5 M5 0.5 V5.5" stroke="#555" stroke-width="0.7"/></svg>
<svg class="ab" style="left:786px;top:472px" width="6" height="8" viewBox="0 0 6 8"><path d="M1 0.5 L5 4 L1 7.5 Z" fill="#333"/></svg>
<svg class="ab" style="left:171px;top:503px" width="624" height="288" viewBox="0 0 624 288"><rect x="23.5" y="8.5" width="592.0" height="258.0" fill="none" stroke="#d0d0d0" stroke-width="1"/><line x1="19.5" y1="235.5" x2="615" y2="235.5" stroke="#d9d9d9" stroke-width="1.2"/><line x1="19.5" y1="203.5" x2="615" y2="203.5" stroke="#d9d9d9" stroke-width="1.2"/><line x1="19.5" y1="171.5" x2="615" y2="171.5" stroke="#d9d9d9" stroke-width="1.2"/><line x1="19.5" y1="140.5" x2="615" y2="140.5" stroke="#d9d9d9" stroke-width="1.2"/><line x1="19.5" y1="108.5" x2="615" y2="108.5" stroke="#d9d9d9" stroke-width="1.2"/><line x1="19.5" y1="76.5" x2="615" y2="76.5" stroke="#d9d9d9" stroke-width="1.2"/><line x1="19.5" y1="45.5" x2="615" y2="45.5" stroke="#d9d9d9" stroke-width="1.2"/><line x1="19.5" y1="13.5" x2="615" y2="13.5" stroke="#d9d9d9" stroke-width="1.2"/><line x1="21" y1="256.5" x2="23" y2="256.5" stroke="#c0c0c0" stroke-width="1"/><line x1="21" y1="245.5" x2="23" y2="245.5" stroke="#c0c0c0" stroke-width="1"/><line x1="21" y1="224.5" x2="23" y2="224.5" stroke="#c0c0c0" stroke-width="1"/><line x1="21" y1="214.5" x2="23" y2="214.5" stroke="#c0c0c0" stroke-width="1"/><line x1="21" y1="192.5" x2="23" y2="192.5" stroke="#c0c0c0" stroke-width="1"/><line x1="21" y1="182.5" x2="23" y2="182.5" stroke="#c0c0c0" stroke-width="1"/><line x1="21" y1="161.5" x2="23" y2="161.5" stroke="#c0c0c0" stroke-width="1"/><line x1="21" y1="150.5" x2="23" y2="150.5" stroke="#c0c0c0" stroke-width="1"/><line x1="21" y1="129.5" x2="23" y2="129.5" stroke="#c0c0c0" stroke-width="1"/><line x1="21" y1="118.5" x2="23" y2="118.5" stroke="#c0c0c0" stroke-width="1"/><line x1="21" y1="97.5" x2="23" y2="97.5" stroke="#c0c0c0" stroke-width="1"/><line x1="21" y1="87.5" x2="23" y2="87.5" stroke="#c0c0c0" stroke-width="1"/><line x1="21" y1="66.5" x2="23" y2="66.5" stroke="#c0c0c0" stroke-width="1"/><line x1="21" y1="55.5" x2="23" y2="55.5" stroke="#c0c0c0" stroke-width="1"/><line x1="21" y1="34.5" x2="23" y2="34.5" stroke="#c0c0c0" stroke-width="1"/><line x1="21" y1="23.5" x2="23" y2="23.5" stroke="#c0c0c0" stroke-width="1"/><line x1="23.5" y1="8" x2="23.5" y2="267" stroke="#b0b0b0" stroke-width="1"/><line x1="19.5" y1="266.5" x2="615" y2="266.5" stroke="#c2c2c2" stroke-width="1"/><line x1="26.5" y1="267" x2="26.5" y2="269.5" stroke="#b4b4b4" stroke-width="1"/><line x1="33.5" y1="267" x2="33.5" y2="271.5" stroke="#b4b4b4" stroke-width="1"/><line x1="41.5" y1="267" x2="41.5" y2="269.5" stroke="#b4b4b4" stroke-width="1"/><line x1="48.5" y1="267" x2="48.5" y2="269.5" stroke="#b4b4b4" stroke-width="1"/><line x1="56.5" y1="267" x2="56.5" y2="269.5" stroke="#b4b4b4" stroke-width="1"/><line x1="64.5" y1="267" x2="64.5" y2="269.5" stroke="#b4b4b4" stroke-width="1"/><line x1="71.5" y1="267" x2="71.5" y2="271.5" stroke="#b4b4b4" stroke-width="1"/><line x1="79.5" y1="267" x2="79.5" y2="269.5" stroke="#b4b4b4" stroke-width="1"/><line x1="87.5" y1="267" x2="87.5" y2="269.5" stroke="#b4b4b4" stroke-width="1"/><line x1="94.5" y1="267" x2="94.5" y2="269.5" stroke="#b4b4b4" stroke-width="1"/><line x1="102.5" y1="267" x2="102.5" y2="269.5" stroke="#b4b4b4" stroke-width="1"/><line x1="109.5" y1="267" x2="109.5" y2="271.5" stroke="#b4b4b4" stroke-width="1"/><line x1="117.5" y1="267" x2="117.5" y2="269.5" stroke="#b4b4b4" stroke-width="1"/><line x1="125.5" y1="267" x2="125.5" y2="269.5" stroke="#b4b4b4" stroke-width="1"/><line x1="132.5" y1="267" x2="132.5" y2="269.5" stroke="#b4b4b4" stroke-width="1"/><line x1="140.5" y1="267" x2="140.5" y2="269.5" stroke="#b4b4b4" stroke-width="1"/><line x1="147.5" y1="267" x2="147.5" y2="271.5" stroke="#b4b4b4" stroke-width="1"/><line x1="155.5" y1="267" x2="155.5" y2="269.5" stroke="#b4b4b4" stroke-width="1"/><line x1="163.5" y1="267" x2="163.5" y2="269.5" stroke="#b4b4b4" stroke-width="1"/><line x1="170.5" y1="267" x2="170.5" y2="269.5" stroke="#b4b4b4" stroke-width="1"/><line x1="178.5" y1="267" x2="178.5" y2="269.5" stroke="#b4b4b4" stroke-width="1"/><line x1="186.5" y1="267" x2="186.5" y2="271.5" stroke="#b4b4b4" stroke-width="1"/><line x1="193.5" y1="267" x2="193.5" y2="269.5" stroke="#b4b4b4" stroke-width="1"/><line x1="201.5" y1="267" x2="201.5" y2="269.5" stroke="#b4b4b4" stroke-width="1"/><line x1="208.5" y1="267" x2="208.5" y2="269.5" stroke="#b4b4b4" stroke-width="1"/><line x1="216.5" y1="267" x2="216.5" y2="269.5" stroke="#b4b4b4" stroke-width="1"/><line x1="224.5" y1="267" x2="224.5" y2="271.5" stroke="#b4b4b4" stroke-width="1"/><line x1="231.5" y1="267" x2="231.5" y2="269.5" stroke="#b4b4b4" stroke-width="1"/><line x1="239.5" y1="267" x2="239.5" y2="269.5" stroke="#b4b4b4" stroke-width="1"/><line x1="247.5" y1="267" x2="247.5" y2="269.5" stroke="#b4b4b4" stroke-width="1"/><line x1="254.5" y1="267" x2="254.5" y2="269.5" stroke="#b4b4b4" stroke-width="1"/><line x1="262.5" y1="267" x2="262.5" y2="271.5" stroke="#b4b4b4" stroke-width="1"/><line x1="269.5" y1="267" x2="269.5" y2="269.5" stroke="#b4b4b4" stroke-width="1"/><line x1="277.5" y1="267" x2="277.5" y2="269.5" stroke="#b4b4b4" stroke-width="1"/><line x1="285.5" y1="267" x2="285.5" y2="269.5" stroke="#b4b4b4" stroke-width="1"/><line x1="292.5" y1="267" x2="292.5" y2="269.5" stroke="#b4b4b4" stroke-width="1"/><line x1="300.5" y1="267" x2="300.5" y2="271.5" stroke="#b4b4b4" stroke-width="1"/><line x1="308.5" y1="267" x2="308.5" y2="269.5" stroke="#b4b4b4" stroke-width="1"/><line x1="315.5" y1="267" x2="315.5" y2="269.5" stroke="#b4b4b4" stroke-width="1"/><line x1="323.5" y1="267" x2="323.5" y2="269.5" stroke="#b4b4b4" stroke-width="1"/><line x1="330.5" y1="267" x2="330.5" y2="269.5" stroke="#b4b4b4" stroke-width="1"/><line x1="338.5" y1="267" x2="338.5" y2="271.5" stroke="#b4b4b4" stroke-width="1"/><line x1="346.5" y1="267" x2="346.5" y2="269.5" stroke="#b4b4b4" stroke-width="1"/><line x1="353.5" y1="267" x2="353.5" y2="269.5" stroke="#b4b4b4" stroke-width="1"/><line x1="361.5" y1="267" x2="361.5" y2="269.5" stroke="#b4b4b4" stroke-width="1"/><line x1="368.5" y1="267" x2="368.5" y2="269.5" stroke="#b4b4b4" stroke-width="1"/><line x1="376.5" y1="267" x2="376.5" y2="271.5" stroke="#b4b4b4" stroke-width="1"/><line x1="384.5" y1="267" x2="384.5" y2="269.5" stroke="#b4b4b4" stroke-width="1"/><line x1="391.5" y1="267" x2="391.5" y2="269.5" stroke="#b4b4b4" stroke-width="1"/><line x1="399.5" y1="267" x2="399.5" y2="269.5" stroke="#b4b4b4" stroke-width="1"/><line x1="407.5" y1="267" x2="407.5" y2="269.5" stroke="#b4b4b4" stroke-width="1"/><line x1="414.5" y1="267" x2="414.5" y2="271.5" stroke="#b4b4b4" stroke-width="1"/><line x1="422.5" y1="267" x2="422.5" y2="269.5" stroke="#b4b4b4" stroke-width="1"/><line x1="429.5" y1="267" x2="429.5" y2="269.5" stroke="#b4b4b4" stroke-width="1"/><line x1="437.5" y1="267" x2="437.5" y2="269.5" stroke="#b4b4b4" stroke-width="1"/><line x1="445.5" y1="267" x2="445.5" y2="269.5" stroke="#b4b4b4" stroke-width="1"/><line x1="452.5" y1="267" x2="452.5" y2="271.5" stroke="#b4b4b4" stroke-width="1"/><line x1="460.5" y1="267" x2="460.5" y2="269.5" stroke="#b4b4b4" stroke-width="1"/><line x1="468.5" y1="267" x2="468.5" y2="269.5" stroke="#b4b4b4" stroke-width="1"/><line x1="475.5" y1="267" x2="475.5" y2="269.5" stroke="#b4b4b4" stroke-width="1"/><line x1="483.5" y1="267" x2="483.5" y2="269.5" stroke="#b4b4b4" stroke-width="1"/><line x1="490.5" y1="267" x2="490.5" y2="271.5" stroke="#b4b4b4" stroke-width="1"/><line x1="498.5" y1="267" x2="498.5" y2="269.5" stroke="#b4b4b4" stroke-width="1"/><line x1="506.5" y1="267" x2="506.5" y2="269.5" stroke="#b4b4b4" stroke-width="1"/><line x1="513.5" y1="267" x2="513.5" y2="269.5" stroke="#b4b4b4" stroke-width="1"/><line x1="521.5" y1="267" x2="521.5" y2="269.5" stroke="#b4b4b4" stroke-width="1"/><line x1="529.5" y1="267" x2="529.5" y2="271.5" stroke="#b4b4b4" stroke-width="1"/><line x1="536.5" y1="267" x2="536.5" y2="269.5" stroke="#b4b4b4" stroke-width="1"/><line x1="544.5" y1="267" x2="544.5" y2="269.5" stroke="#b4b4b4" stroke-width="1"/><line x1="551.5" y1="267" x2="551.5" y2="269.5" stroke="#b4b4b4" stroke-width="1"/><line x1="559.5" y1="267" x2="559.5" y2="269.5" stroke="#b4b4b4" stroke-width="1"/><line x1="567.5" y1="267" x2="567.5" y2="271.5" stroke="#b4b4b4" stroke-width="1"/><line x1="574.5" y1="267" x2="574.5" y2="269.5" stroke="#b4b4b4" stroke-width="1"/><line x1="582.5" y1="267" x2="582.5" y2="269.5" stroke="#b4b4b4" stroke-width="1"/><line x1="589.5" y1="267" x2="589.5" y2="269.5" stroke="#b4b4b4" stroke-width="1"/><line x1="597.5" y1="267" x2="597.5" y2="269.5" stroke="#b4b4b4" stroke-width="1"/><line x1="605.5" y1="267" x2="605.5" y2="271.5" stroke="#b4b4b4" stroke-width="1"/><line x1="612.5" y1="267" x2="612.5" y2="269.5" stroke="#b4b4b4" stroke-width="1"/><polyline points="33.2,150.9 52.2,118.6 71.3,100.6 90.3,80.1 109.4,50.7 128.4,31.9 147.5,37.5 166.5,59.4 185.6,94.0 204.6,133.9 223.7,173.5 242.8,202.0 261.8,217.7 280.9,223.4 299.9,225.5 318.9,230.9 338.0,239.8 357.0,246.7 376.1,246.4 395.1,241.7 414.2,238.5 433.2,240.7 452.3,244.2 471.4,245.2 490.4,241.7 509.5,235.0 528.5,229.3 547.5,228.0 566.6,232.2 585.7,235.7 604.7,239.5" fill="none" stroke="#5b7fbf" stroke-width="1.6" stroke-linejoin="round"/><defs><linearGradient id="spec" x1="0" x2="1" y1="0" y2="0"><stop offset="0" stop-color="#7a1fc8"/><stop offset="0.08" stop-color="#4a1ff0"/><stop offset="0.2" stop-color="#2040ff"/><stop offset="0.3" stop-color="#3aa0ff"/><stop offset="0.37" stop-color="#60e8f0"/><stop offset="0.45" stop-color="#50e060"/><stop offset="0.55" stop-color="#a0e020"/><stop offset="0.62" stop-color="#f0e020"/><stop offset="0.72" stop-color="#f09a20"/><stop offset="0.8" stop-color="#e85020"/><stop offset="1" stop-color="#e02a20"/></linearGradient></defs><rect x="29" y="282.5" width="575" height="3.5" fill="url(#spec)"/></svg>
<div class="t d" style="left:186px;top:769.6px;font-size:8.8px;color:#222;transform:translate(-100%,-50%) scaleX(0.85);transform-origin:100% 50%;">0</div>
<div class="t d" style="left:186px;top:737.9px;font-size:8.8px;color:#222;transform:translate(-100%,-50%) scaleX(0.85);transform-origin:100% 50%;">5</div>
<div class="t d" style="left:186px;top:706.2px;font-size:8.8px;color:#222;transform:translate(-100%,-50%) scaleX(0.85);transform-origin:100% 50%;">10</div>
<div class="t d" style="left:186px;top:674.5px;font-size:8.8px;color:#222;transform:translate(-100%,-50%) scaleX(0.85);transform-origin:100% 50%;">15</div>
<div class="t d" style="left:186px;top:642.8000000000001px;font-size:8.8px;color:#222;transform:translate(-100%,-50%) scaleX(0.85);transform-origin:100% 50%;">20</div>
<div class="t d" style="left:186px;top:611.1px;font-size:8.8px;color:#222;transform:translate(-100%,-50%) scaleX(0.85);transform-origin:100% 50%;">25</div>
<div class="t d" style="left:186px;top:579.4000000000001px;font-size:8.8px;color:#222;transform:translate(-100%,-50%) scaleX(0.85);transform-origin:100% 50%;">30</div>
<div class="t d" style="left:186px;top:547.7px;font-size:8.8px;color:#222;transform:translate(-100%,-50%) scaleX(0.85);transform-origin:100% 50%;">35</div>
<div class="t d" style="left:186px;top:516.0px;font-size:8.8px;color:#222;transform:translate(-100%,-50%) scaleX(0.85);transform-origin:100% 50%;">40</div>
<div class="t d" style="left:204.2px;top:781.2px;font-size:8.8px;color:#222;transform:translate(-50%,-50%) scaleX(0.85);transform-origin:50% 50%;">400nm</div>
<div class="t d" style="left:242.29999999999998px;top:781.2px;font-size:8.8px;color:#222;transform:translate(-50%,-50%) scaleX(0.85);transform-origin:50% 50%;">420nm</div>
<div class="t d" style="left:280.4px;top:781.2px;font-size:8.8px;color:#222;transform:translate(-50%,-50%) scaleX(0.85);transform-origin:50% 50%;">440nm</div>
<div class="t d" style="left:318.5px;top:781.2px;font-size:8.8px;color:#222;transform:translate(-50%,-50%) scaleX(0.85);transform-origin:50% 50%;">460nm</div>
<div class="t d" style="left:356.6px;top:781.2px;font-size:8.8px;color:#222;transform:translate(-50%,-50%) scaleX(0.85);transform-origin:50% 50%;">480nm</div>
<div class="t d" style="left:394.7px;top:781.2px;font-size:8.8px;color:#222;transform:translate(-50%,-50%) scaleX(0.85);transform-origin:50% 50%;">500nm</div>
<div class="t d" style="left:432.79999999999995px;top:781.2px;font-size:8.8px;color:#222;transform:translate(-50%,-50%) scaleX(0.85);transform-origin:50% 50%;">520nm</div>
<div class="t d" style="left:470.9px;top:781.2px;font-size:8.8px;color:#222;transform:translate(-50%,-50%) scaleX(0.85);transform-origin:50% 50%;">540nm</div>
<div class="t d" style="left:509.0px;top:781.2px;font-size:8.8px;color:#222;transform:translate(-50%,-50%) scaleX(0.85);transform-origin:50% 50%;">560nm</div>
<div class="t d" style="left:547.0999999999999px;top:781.2px;font-size:8.8px;color:#222;transform:translate(-50%,-50%) scaleX(0.85);transform-origin:50% 50%;">580nm</div>
<div class="t d" style="left:585.2px;top:781.2px;font-size:8.8px;color:#222;transform:translate(-50%,-50%) scaleX(0.85);transform-origin:50% 50%;">600nm</div>
<div class="t d" style="left:623.3px;top:781.2px;font-size:8.8px;color:#222;transform:translate(-50%,-50%) scaleX(0.85);transform-origin:50% 50%;">620nm</div>
<div class="t d" style="left:661.4px;top:781.2px;font-size:8.8px;color:#222;transform:translate(-50%,-50%) scaleX(0.85);transform-origin:50% 50%;">640nm</div>
<div class="t d" style="left:699.5px;top:781.2px;font-size:8.8px;color:#222;transform:translate(-50%,-50%) scaleX(0.85);transform-origin:50% 50%;">660nm</div>
<div class="t d" style="left:737.5999999999999px;top:781.2px;font-size:8.8px;color:#222;transform:translate(-50%,-50%) scaleX(0.85);transform-origin:50% 50%;">680nm</div>
<div class="t d" style="left:775.7px;top:781.2px;font-size:8.8px;color:#222;transform:translate(-50%,-50%) scaleX(0.85);transform-origin:50% 50%;">700nm</div>
<div class="ab" style="left:800.5px;top:100px;width:400px;height:15px;background:linear-gradient(#fdfdfd 0%,#f4f5f7 50%,#e8eaee 100%)"></div>
<div class="ab" style="left:812px;top:100px;width:1px;height:15px;background:#e2e4e8"></div>
<div class="ab" style="left:880.5px;top:100px;width:1px;height:15px;background:#e2e4e8"></div>
<div class="ab" style="left:939.4px;top:100px;width:1px;height:15px;background:#e2e4e8"></div>
<div class="ab" style="left:998px;top:100px;width:1px;height:15px;background:#e2e4e8"></div>
<div class="ab" style="left:1057px;top:100px;width:1px;height:15px;background:#e2e4e8"></div>
<div class="ab" style="left:1116px;top:100px;width:1px;height:15px;background:#e2e4e8"></div>
<div class="t d" style="left:846px;top:107.6px;font-size:9.6px;color:#1a1a1a;transform:translate(-50%,-50%) scaleX(0.86);transform-origin:50% 50%;">parameter</div>
<div class="t d" style="left:910px;top:107.6px;font-size:9.6px;color:#1a1a1a;transform:translate(-50%,-50%) scaleX(0.86);transform-origin:50% 50%;">Target</div>
<div class="t d" style="left:968.7px;top:107.6px;font-size:9.6px;color:#1a1a1a;transform:translate(-50%,-50%) scaleX(0.86);transform-origin:50% 50%;">Sample</div>
<div class="t d" style="left:1027.5px;top:107.6px;font-size:9.6px;color:#1a1a1a;transform:translate(-50%,-50%) scaleX(0.86);transform-origin:50% 50%;">Difference</div>
<div class="t d" style="left:1086.5px;top:107.6px;font-size:9.6px;color:#1a1a1a;transform:translate(-50%,-50%) scaleX(0.86);transform-origin:50% 50%;">Tolerance</div>
<div class="t d" style="left:1159px;top:107.6px;font-size:9.6px;color:#1a1a1a;transform:translate(-50%,-50%) scaleX(0.86);transform-origin:50% 50%;">Result</div>
<div class="t d" style="left:934px;top:196px;font-size:9.6px;color:#111;transform:translate(-50%,-50%) scaleX(0.88);transform-origin:50% 50%;">Target</div>
<div class="t d" style="left:1112.5px;top:195.5px;font-size:9.6px;color:#111;transform:translate(-50%,-50%) scaleX(0.88);transform-origin:50% 50%;">Sample</div>
<div class="ab" style="left:852px;top:217.5px;width:170px;height:251px;background:#244897"></div>
<div class="t d" style="left:822.4px;top:343.5px;font-size:9.6px;color:#111;transform:translate(-50%,-50%) scaleX(0.88);transform-origin:50% 50%;">M0</div>
<svg class="ab" style="left:800px;top:498px" width="400" height="262" viewBox="0 0 400 262"><line x1="80.5" y1="14.5" x2="80.5" y2="259" stroke="#c4c4c4" stroke-width="1"/><line x1="85.5" y1="14.5" x2="85.5" y2="259" stroke="#e4e4e4" stroke-width="1"/><line x1="90.5" y1="14.5" x2="90.5" y2="259" stroke="#e4e4e4" stroke-width="1"/><line x1="96.5" y1="14.5" x2="96.5" y2="259" stroke="#e4e4e4" stroke-width="1"/><line x1="101.5" y1="14.5" x2="101.5" y2="259" stroke="#e4e4e4" stroke-width="1"/><line x1="107.5" y1="14.5" x2="107.5" y2="259" stroke="#c4c4c4" stroke-width="1"/><line x1="112.5" y1="14.5" x2="112.5" y2="259" stroke="#e4e4e4" stroke-width="1"/><line x1="118.5" y1="14.5" x2="118.5" y2="259" stroke="#e4e4e4" stroke-width="1"/><line x1="123.5" y1="14.5" x2="123.5" y2="259" stroke="#e4e4e4" stroke-width="1"/><line x1="129.5" y1="14.5" x2="129.5" y2="259" stroke="#e4e4e4" stroke-width="1"/><line x1="134.5" y1="14.5" x2="134.5" y2="259" stroke="#c4c4c4" stroke-width="1"/><line x1="139.5" y1="14.5" x2="139.5" y2="259" stroke="#e4e4e4" stroke-width="1"/><line x1="145.5" y1="14.5" x2="145.5" y2="259" stroke="#e4e4e4" stroke-width="1"/><line x1="150.5" y1="14.5" x2="150.5" y2="259" stroke="#e4e4e4" stroke-width="1"/><line x1="156.5" y1="14.5" x2="156.5" y2="259" stroke="#e4e4e4" stroke-width="1"/><line x1="161.5" y1="14.5" x2="161.5" y2="259" stroke="#c4c4c4" stroke-width="1"/><line x1="167.5" y1="14.5" x2="167.5" y2="259" stroke="#e4e4e4" stroke-width="1"/><line x1="172.5" y1="14.5" x2="172.5" y2="259" stroke="#e4e4e4" stroke-width="1"/><line x1="178.5" y1="14.5" x2="178.5" y2="259" stroke="#e4e4e4" stroke-width="1"/><line x1="183.5" y1="14.5" x2="183.5" y2="259" stroke="#e4e4e4" stroke-width="1"/><line x1="188.5" y1="14.5" x2="188.5" y2="259" stroke="#c4c4c4" stroke-width="1"/><line x1="194.5" y1="14.5" x2="194.5" y2="259" stroke="#e4e4e4" stroke-width="1"/><line x1="199.5" y1="14.5" x2="199.5" y2="259" stroke="#e4e4e4" stroke-width="1"/><line x1="205.5" y1="14.5" x2="205.5" y2="259" stroke="#e4e4e4" stroke-width="1"/><line x1="210.5" y1="14.5" x2="210.5" y2="259" stroke="#e4e4e4" stroke-width="1"/><line x1="216.5" y1="14.5" x2="216.5" y2="259" stroke="#c4c4c4" stroke-width="1"/><line x1="221.5" y1="14.5" x2="221.5" y2="259" stroke="#e4e4e4" stroke-width="1"/><line x1="227.5" y1="14.5" x2="227.5" y2="259" stroke="#e4e4e4" stroke-width="1"/><line x1="232.5" y1="14.5" x2="232.5" y2="259" stroke="#e4e4e4" stroke-width="1"/><line x1="238.5" y1="14.5" x2="238.5" y2="259" stroke="#e4e4e4" stroke-width="1"/><line x1="243.5" y1="14.5" x2="243.5" y2="259" stroke="#c4c4c4" stroke-width="1"/><line x1="248.5" y1="14.5" x2="248.5" y2="259" stroke="#e4e4e4" stroke-width="1"/><line x1="254.5" y1="14.5" x2="254.5" y2="259" stroke="#e4e4e4" stroke-width="1"/><line x1="259.5" y1="14.5" x2="259.5" y2="259" stroke="#e4e4e4" stroke-width="1"/><line x1="265.5" y1="14.5" x2="265.5" y2="259" stroke="#e4e4e4" stroke-width="1"/><line x1="270.5" y1="14.5" x2="270.5" y2="259" stroke="#c4c4c4" stroke-width="1"/><line x1="276.5" y1="14.5" x2="276.5" y2="259" stroke="#e4e4e4" stroke-width="1"/><line x1="281.5" y1="14.5" x2="281.5" y2="259" stroke="#e4e4e4" stroke-width="1"/><line x1="287.5" y1="14.5" x2="287.5" y2="259" stroke="#e4e4e4" stroke-width="1"/><line x1="292.5" y1="14.5" x2="292.5" y2="259" stroke="#e4e4e4" stroke-width="1"/><line x1="298.5" y1="14.5" x2="298.5" y2="259" stroke="#c4c4c4" stroke-width="1"/><line x1="303.5" y1="14.5" x2="303.5" y2="259" stroke="#e4e4e4" stroke-width="1"/><line x1="308.5" y1="14.5" x2="308.5" y2="259" stroke="#e4e4e4" stroke-width="1"/><line x1="314.5" y1="14.5" x2="314.5" y2="259" stroke="#e4e4e4" stroke-width="1"/><line x1="319.5" y1="14.5" x2="319.5" y2="259" stroke="#e4e4e4" stroke-width="1"/><line x1="325.5" y1="14.5" x2="325.5" y2="259" stroke="#c4c4c4" stroke-width="1"/><line x1="79.5" y1="260.5" x2="324.5" y2="260.5" stroke="#c4c4c4" stroke-width="1"/><line x1="79.5" y1="255.5" x2="324.5" y2="255.5" stroke="#e4e4e4" stroke-width="1"/><line x1="79.5" y1="249.5" x2="324.5" y2="249.5" stroke="#e4e4e4" stroke-width="1"/><line x1="79.5" y1="244.5" x2="324.5" y2="244.5" stroke="#e4e4e4" stroke-width="1"/><line x1="79.5" y1="238.5" x2="324.5" y2="238.5" stroke="#e4e4e4" stroke-width="1"/><line x1="79.5" y1="233.5" x2="324.5" y2="233.5" stroke="#c4c4c4" stroke-width="1"/><line x1="79.5" y1="228.5" x2="324.5" y2="228.5" stroke="#e4e4e4" stroke-width="1"/><line x1="79.5" y1="222.5" x2="324.5" y2="222.5" stroke="#e4e4e4" stroke-width="1"/><line x1="79.5" y1="217.5" x2="324.5" y2="217.5" stroke="#e4e4e4" stroke-width="1"/><line x1="79.5" y1="211.5" x2="324.5" y2="211.5" stroke="#e4e4e4" stroke-width="1"/><line x1="79.5" y1="206.5" x2="324.5" y2="206.5" stroke="#c4c4c4" stroke-width="1"/><line x1="79.5" y1="200.5" x2="324.5" y2="200.5" stroke="#e4e4e4" stroke-width="1"/><line x1="79.5" y1="195.5" x2="324.5" y2="195.5" stroke="#e4e4e4" stroke-width="1"/><line x1="79.5" y1="189.5" x2="324.5" y2="189.5" stroke="#e4e4e4" stroke-width="1"/><line x1="79.5" y1="184.5" x2="324.5" y2="184.5" stroke="#e4e4e4" stroke-width="1"/><line x1="79.5" y1="178.5" x2="324.5" y2="178.5" stroke="#c4c4c4" stroke-width="1"/><line x1="79.5" y1="173.5" x2="324.5" y2="173.5" stroke="#e4e4e4" stroke-width="1"/><line x1="79.5" y1="168.5" x2="324.5" y2="168.5" stroke="#e4e4e4" stroke-width="1"/><line x1="79.5" y1="162.5" x2="324.5" y2="162.5" stroke="#e4e4e4" stroke-width="1"/><line x1="79.5" y1="157.5" x2="324.5" y2="157.5" stroke="#e4e4e4" stroke-width="1"/><line x1="79.5" y1="151.5" x2="324.5" y2="151.5" stroke="#c4c4c4" stroke-width="1"/><line x1="79.5" y1="146.5" x2="324.5" y2="146.5" stroke="#e4e4e4" stroke-width="1"/><line x1="79.5" y1="140.5" x2="324.5" y2="140.5" stroke="#e4e4e4" stroke-width="1"/><line x1="79.5" y1="135.5" x2="324.5" y2="135.5" stroke="#e4e4e4" stroke-width="1"/><line x1="79.5" y1="129.5" x2="324.5" y2="129.5" stroke="#e4e4e4" stroke-width="1"/><line x1="79.5" y1="124.5" x2="324.5" y2="124.5" stroke="#c4c4c4" stroke-width="1"/><line x1="79.5" y1="118.5" x2="324.5" y2="118.5" stroke="#e4e4e4" stroke-width="1"/><line x1="79.5" y1="113.5" x2="324.5" y2="113.5" stroke="#e4e4e4" stroke-width="1"/><line x1="79.5" y1="108.5" x2="324.5" y2="108.5" stroke="#e4e4e4" stroke-width="1"/><line x1="79.5" y1="102.5" x2="324.5" y2="102.5" stroke="#e4e4e4" stroke-width="1"/><line x1="79.5" y1="97.5" x2="324.5" y2="97.5" stroke="#c4c4c4" stroke-width="1"/><line x1="79.5" y1="91.5" x2="324.5" y2="91.5" stroke="#e4e4e4" stroke-width="1"/><line x1="79.5" y1="86.5" x2="324.5" y2="86.5" stroke="#e4e4e4" stroke-width="1"/><line x1="79.5" y1="80.5" x2="324.5" y2="80.5" stroke="#e4e4e4" stroke-width="1"/><line x1="79.5" y1="75.5" x2="324.5" y2="75.5" stroke="#e4e4e4" stroke-width="1"/><line x1="79.5" y1="69.5" x2="324.5" y2="69.5" stroke="#c4c4c4" stroke-width="1"/><line x1="79.5" y1="64.5" x2="324.5" y2="64.5" stroke="#e4e4e4" stroke-width="1"/><line x1="79.5" y1="59.5" x2="324.5" y2="59.5" stroke="#e4e4e4" stroke-width="1"/><line x1="79.5" y1="53.5" x2="324.5" y2="53.5" stroke="#e4e4e4" stroke-width="1"/><line x1="79.5" y1="48.5" x2="324.5" y2="48.5" stroke="#e4e4e4" stroke-width="1"/><line x1="79.5" y1="42.5" x2="324.5" y2="42.5" stroke="#c4c4c4" stroke-width="1"/><line x1="79.5" y1="37.5" x2="324.5" y2="37.5" stroke="#e4e4e4" stroke-width="1"/><line x1="79.5" y1="31.5" x2="324.5" y2="31.5" stroke="#e4e4e4" stroke-width="1"/><line x1="79.5" y1="26.5" x2="324.5" y2="26.5" stroke="#e4e4e4" stroke-width="1"/><line x1="79.5" y1="20.5" x2="324.5" y2="20.5" stroke="#e4e4e4" stroke-width="1"/><line x1="79.5" y1="15.5" x2="324.5" y2="15.5" stroke="#c4c4c4" stroke-width="1"/><rect x="80.0" y="15.0" width="244.0" height="244.5" fill="none" stroke="#c6c6c6" stroke-width="1"/><path d="M80.0 14.5 V259.5 H324.5" fill="none" stroke="#8c8c8c" stroke-width="1"/></svg>
<div class="ab" style="left:852px;top:527px;width:240px;height:235px;background:radial-gradient(circle at 123.9px 138.7px,rgba(255,255,255,.95) 0px,rgba(255,255,255,.4) 8px,rgba(255,255,255,.1) 22px,rgba(255,255,255,0) 40px),conic-gradient(from 0deg at 123.9px 138.7px,#8cf03e 0deg,#98f03c 22deg,#d8f440 33deg,#ffff48 37deg,#f4c838 44deg,#e8883a 58deg,#e25a2a 80deg,#e04a26 100deg,#e04840 130deg,#e04a78 150deg,#e256d0 163deg,#e25cf4 168deg,#a448f6 178deg,#5a3cf8 192deg,#1c30f4 212deg,#1838f2 228deg,#2660f6 246deg,#48a8fa 260deg,#78ecfc 268deg,#7cfcfc 271deg,#88f4b8 280deg,#8cf070 300deg,#8cf03e 330deg,#8cf03e 360deg);clip-path:polygon(74.9px 229.8px,74.9px 229.9px,72.9px 228.8px,70.2px 226.4px,66.7px 223.1px,61.3px 215.4px,52.4px 195.0px,46.2px 176.5px,39.9px 150.8px,33.9px 118.7px,29.7px 84.5px,28.8px 66.6px,28.6px 52.8px,29.4px 38.0px,31.3px 26.8px,34.0px 17.6px,38.1px 9.9px,43.3px 5.3px,47.7px 4.0px,52.8px 4.2px,58.6px 6.1px,69.7px 11.6px,80.1px 18.2px,90.1px 25.7px,99.9px 33.8px,109.7px 42.5px,119.4px 51.6px,129.2px 61.0px,138.9px 70.5px,148.5px 80.0px,158.0px 89.4px,167.2px 98.6px,176.0px 107.4px,184.2px 115.6px,191.8px 123.2px,198.4px 129.7px,204.1px 135.4px,208.9px 140.2px,212.8px 144.1px,215.9px 147.2px,218.4px 149.6px,220.4px 151.6px,222.1px 153.3px,223.4px 154.7px,224.5px 155.7px,225.3px 156.5px,226.0px 157.2px,226.4px 157.6px,227.7px 158.9px)"></div>
<svg class="ab" style="left:930.5px;top:710.5px" width="5" height="5" viewBox="0 0 5 5"><path d="M0.5 0.5 L4.5 4.5 M4.5 0.5 L0.5 4.5" stroke="#111" stroke-width="1"/></svg>
<div class="t d" style="left:878.5px;top:732.1500000000001px;font-size:8.6px;color:#222;transform:translate(-100%,-50%) scaleX(0.98);transform-origin:100% 50%;font-family:'Liberation Serif',serif;font-weight:bold;-webkit-text-stroke:0">0. 1</div>
<div class="t d" style="left:878.5px;top:704.9000000000001px;font-size:8.6px;color:#222;transform:translate(-100%,-50%) scaleX(0.98);transform-origin:100% 50%;font-family:'Liberation Serif',serif;font-weight:bold;-webkit-text-stroke:0">0. 2</div>
<div class="t d" style="left:878.5px;top:677.6500000000001px;font-size:8.6px;color:#222;transform:translate(-100%,-50%) scaleX(0.98);transform-origin:100% 50%;font-family:'Liberation Serif',serif;font-weight:bold;-webkit-text-stroke:0">0. 3</div>
<div class="t d" style="left:878.5px;top:650.4000000000001px;font-size:8.6px;color:#222;transform:translate(-100%,-50%) scaleX(0.98);transform-origin:100% 50%;font-family:'Liberation Serif',serif;font-weight:bold;-webkit-text-stroke:0">0. 4</div>
<div class="t d" style="left:878.5px;top:623.1500000000001px;font-size:8.6px;color:#222;transform:translate(-100%,-50%) scaleX(0.98);transform-origin:100% 50%;font-family:'Liberation Serif',serif;font-weight:bold;-webkit-text-stroke:0">0. 5</div>
<div class="t d" style="left:878.5px;top:595.9000000000001px;font-size:8.6px;color:#222;transform:translate(-100%,-50%) scaleX(0.98);transform-origin:100% 50%;font-family:'Liberation Serif',serif;font-weight:bold;-webkit-text-stroke:0">0. 6</div>
<div class="t d" style="left:878.5px;top:568.6500000000001px;font-size:8.6px;color:#222;transform:translate(-100%,-50%) scaleX(0.98);transform-origin:100% 50%;font-family:'Liberation Serif',serif;font-weight:bold;-webkit-text-stroke:0">0. 7</div>
<div class="t d" style="left:878.5px;top:541.4000000000001px;font-size:8.6px;color:#222;transform:translate(-100%,-50%) scaleX(0.98);transform-origin:100% 50%;font-family:'Liberation Serif',serif;font-weight:bold;-webkit-text-stroke:0">0. 8</div>
<div class="t d" style="left:877.5px;top:517px;font-size:9px;color:#111;transform:translate(-100%,-50%) scaleX(0.9);transform-origin:100% 50%;font-family:'Liberation Serif',serif;font-weight:bold;">y</div>
<div class="ab" style="left:1191.5px;top:498px;width:8.5px;height:262px;background:#f0f0f0"></div>
<div class="ab" style="left:1195.5px;top:510px;width:4px;height:68px;background:#808080;border-radius:2px"></div>
<div class="ab" style="left:800.5px;top:760px;width:399.5px;height:12px;background:#eeeeee"></div>
<div class="ab" style="left:800.5px;top:771px;width:399.5px;height:1px;background:#fafafa"></div>
<div class="ab" style="left:813px;top:764px;width:196px;height:3.5px;background:#808080;border-radius:2px"></div>
<div class="ab" style="left:800.5px;top:772px;width:399.5px;height:19px;background:linear-gradient(#676767,#5c5c5c)"></div>
<div class="ab" style="left:800.5px;top:772px;width:399.5px;height:1px;background:#4a4a4a"></div>
<div class="ab" style="left:1046px;top:772.5px;width:84px;height:16px;background:#7a7a7a"></div>
<div class="t w" style="left:810px;top:781.5px;font-size:9.6px;color:#eeeeee;transform:translate(0,-50%) scaleX(0.87);transform-origin:0 50%;">L*a*b*Ch color difference chart</div>
<div class="t w" style="left:941px;top:781.5px;font-size:9.6px;color:#eeeeee;transform:translate(0,-50%) scaleX(0.87);transform-origin:0 50%;">L*a*b*Ch color coordinate</div>
<div class="t w" style="left:1052.5px;top:781.5px;font-size:9.6px;color:#f4f4f4;transform:translate(0,-50%) scaleX(0.87);transform-origin:0 50%;">xy color coordinate</div>
<div class="ab" style="left:31.5px;top:795px;width:1px;height:20px;background:#262626"></div>
<div class="ab" style="left:32.5px;top:795px;width:1px;height:20px;background:#4a4a4a"></div>
<div class="ab" style="left:415px;top:795px;width:1px;height:20px;background:#262626"></div>
<div class="ab" style="left:416px;top:795px;width:1px;height:20px;background:#4a4a4a"></div>
<div class="ab" style="left:486px;top:795px;width:1px;height:20px;background:#262626"></div>
<div class="ab" style="left:487px;top:795px;width:1px;height:20px;background:#4a4a4a"></div>
<div class="ab" style="left:603.3px;top:795px;width:1px;height:20px;background:#262626"></div>
<div class="ab" style="left:604.3px;top:795px;width:1px;height:20px;background:#4a4a4a"></div>
<div class="ab" style="left:711.7px;top:795px;width:1px;height:20px;background:#262626"></div>
<div class="ab" style="left:712.7px;top:795px;width:1px;height:20px;background:#4a4a4a"></div>
<div class="ab" style="left:1092.5px;top:795px;width:1px;height:20px;background:#262626"></div>
<div class="ab" style="left:1093.5px;top:795px;width:1px;height:20px;background:#4a4a4a"></div>
<div class="t w" style="left:6px;top:804.8px;font-size:9.6px;color:#f0f0f0;transform:translate(0,-50%) scaleX(0.92);transform-origin:0 50%;">State</div>
<div class="t w" style="left:422.7px;top:804.8px;font-size:9.6px;color:#f0f0f0;transform:translate(0,-50%) scaleX(0.92);transform-origin:0 50%;">Aperture:Auto</div>
<div class="t w" style="left:494px;top:804.8px;font-size:9.6px;color:#f0f0f0;transform:translate(0,-50%) scaleX(0.92);transform-origin:0 50%;">Reflection/M0/ContainUV</div>
<div class="t w" style="left:610.7px;top:804.8px;font-size:9.6px;color:#f0f0f0;transform:translate(0,-50%) scaleX(0.92);transform-origin:0 50%;">Instrument model:CR30</div>
<div class="t w" style="left:1100.8px;top:804.8px;font-size:9.6px;color:#f0f0f0;transform:translate(0,-50%) scaleX(0.92);transform-origin:0 50%;">Instrument is connected</div></body></html>
